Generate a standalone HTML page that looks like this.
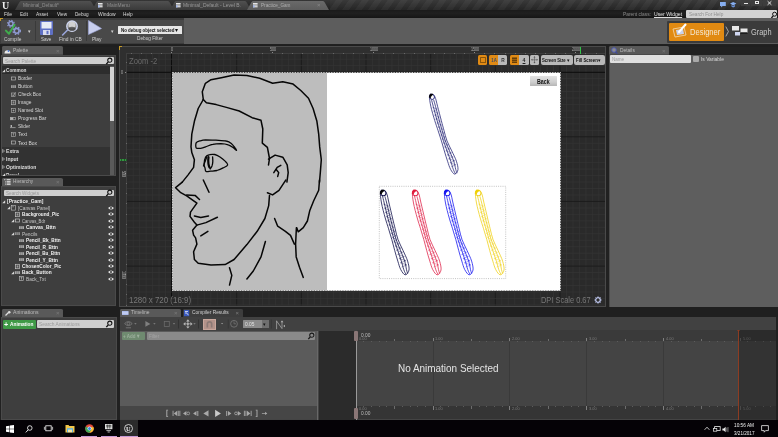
<!DOCTYPE html>
<html><head><meta charset="utf-8"><title>Practice_Gam</title>
<style>
html,body{margin:0;padding:0;background:#212121;}
#r{position:relative;width:778px;height:437px;overflow:hidden;will-change:transform;font-family:"Liberation Sans",sans-serif;background:#212121;}
#r div,#r span,#r svg{position:absolute;}
#r span{white-space:nowrap;display:block;}
#r svg{overflow:visible;}
</style></head><body><div id="r">
<div style="left:0px;top:0px;width:778px;height:10.3px;background:#2b2b2b;background:linear-gradient(rgba(255,255,255,.07),rgba(0,0,0,.12)),repeating-linear-gradient(125deg,#333 0 5px,#2a2a2a 5.6px 10px,#333 10.6px);"></div><div style="left:0px;top:0px;width:330px;height:10px;background:#262626;background:linear-gradient(#363636,#1f1f1f);"></div><svg style="left:0px;top:0px" width="16" height="10" viewBox="0 0 16 10"><circle cx="7" cy="5" r="0" fill="none"/><text x="2" y="8.6" font-size="10" font-weight="700" fill="#eee" font-family="Liberation Serif,serif">U</text></svg><svg style="left:15px;top:1px" width="81" height="9" viewBox="0 0 81 9"><path d="M0 9 L4.4 1.2 Q5 0 6.6 0 L74.4 0 Q76 0 76.6 1.2 L81 9 Z" fill="url(#tg19)"/><defs><linearGradient id="tg19" x1="0" y1="0" x2="0" y2="1"><stop offset="0" stop-color="#505050"/><stop offset="1" stop-color="#3a3a3a"/></linearGradient></defs></svg><span style="left:23.4px;top:0.00px;line-height:10px;font-size:5.8px;color:#8f8f8f;font-weight:400;transform:scaleX(0.819);transform-origin:left center;">Minimal_Default*</span><svg style="left:92px;top:1px" width="82" height="9" viewBox="0 0 82 9"><path d="M0 9 L4.4 1.2 Q5 0 6.6 0 L75.4 0 Q77 0 77.6 1.2 L82 9 Z" fill="url(#tg96)"/><defs><linearGradient id="tg96" x1="0" y1="0" x2="0" y2="1"><stop offset="0" stop-color="#505050"/><stop offset="1" stop-color="#3a3a3a"/></linearGradient></defs></svg><svg style="left:97.8px;top:2.6px" width="5" height="5" viewBox="0 0 5 5"><rect x="0" y="0" width="4.6" height="1.6" fill="#e4e4e4"/><rect x="0" y="2.2" width="4.6" height="2.2" fill="#cfcfcf"/><rect x="0" y="2.2" width="1.6" height="2.2" fill="#9fb4e8"/></svg><span style="left:106.7px;top:0.00px;line-height:10px;font-size:5.8px;color:#8f8f8f;font-weight:400;transform:scaleX(0.842);transform-origin:left center;">MainMenu</span><svg style="left:170px;top:1px" width="81" height="9" viewBox="0 0 81 9"><path d="M0 9 L4.4 1.2 Q5 0 6.6 0 L74.4 0 Q76 0 76.6 1.2 L81 9 Z" fill="url(#tg174)"/><defs><linearGradient id="tg174" x1="0" y1="0" x2="0" y2="1"><stop offset="0" stop-color="#505050"/><stop offset="1" stop-color="#3a3a3a"/></linearGradient></defs></svg><svg style="left:175.8px;top:2.6px" width="5" height="5" viewBox="0 0 5 5"><rect x="0" y="0" width="4.6" height="1.6" fill="#e4e4e4"/><rect x="0" y="2.2" width="4.6" height="2.2" fill="#cfcfcf"/><rect x="0" y="2.2" width="1.6" height="2.2" fill="#9fb4e8"/></svg><span style="left:183px;top:0.00px;line-height:10px;font-size:5.8px;color:#9a9a9a;font-weight:400;transform:scaleX(0.857);transform-origin:left center;">Minimal_Default - Level B.</span><svg style="left:247px;top:1px" width="82" height="9" viewBox="0 0 82 9"><path d="M0 9 L4.4 1.2 Q5 0 6.6 0 L75.4 0 Q77 0 77.6 1.2 L82 9 Z" fill="url(#tg251)"/><defs><linearGradient id="tg251" x1="0" y1="0" x2="0" y2="1"><stop offset="0" stop-color="#6a6a6a"/><stop offset="1" stop-color="#5c5c5c"/></linearGradient></defs></svg><svg style="left:252.8px;top:2.6px" width="5" height="5" viewBox="0 0 5 5"><rect x="0" y="0" width="4.6" height="1.6" fill="#e4e4e4"/><rect x="0" y="2.2" width="4.6" height="2.2" fill="#cfcfcf"/><rect x="0" y="2.2" width="1.6" height="2.2" fill="#9fb4e8"/></svg><span style="left:260.5px;top:0.00px;line-height:10px;font-size:5.8px;color:#b0b0b0;font-weight:400;transform:scaleX(0.803);transform-origin:left center;">Practice_Gam</span><span style="left:317px;top:0.20px;line-height:10px;font-size:6px;color:#888;font-weight:400;">×</span><svg style="left:719.5px;top:1.8px" width="6" height="6" viewBox="0 0 6 6"><path d="M0 0h5.8v4H2.6L1.2 5.6V4H0z" fill="#86aef0"/></svg><svg style="left:729.5px;top:2px" width="6.4" height="6" viewBox="0 0 6.4 6"><path d="M0 1.6L3.2 0 6.4 1.6 3.2 3.4z" fill="#86aef0"/><path d="M1.4 3v1.6L3.2 5.6 5 4.6V3L3.2 4z" fill="#6a92d8"/></svg><div style="left:741px;top:0px;width:9.4px;height:5.6px;background:#3d3d3d;"></div><div style="left:751px;top:0px;width:11.4px;height:5.6px;background:#3d3d3d;"></div><div style="left:763px;top:0px;width:13.4px;height:5.6px;background:#3d3d3d;"></div><div style="left:743.6px;top:3px;width:4px;height:1.2px;background:#e6e6e6;"></div><div style="left:754.6px;top:1px;width:4px;height:3.4px;background:transparent;border:1px solid #e6e6e6;box-sizing:border-box"></div><svg style="left:767px;top:0.8px" width="5" height="4" viewBox="0 0 5 4"><path d="M.6 .2L4.4 3.8M4.4 .2L.6 3.8" stroke="#e6e6e6" stroke-width="1"/></svg><div style="left:0px;top:10.3px;width:778px;height:8px;background:#191919;background:linear-gradient(#1a1a1a,#202020 40%,#151515);"></div><span style="left:3.7px;top:9.00px;line-height:10px;font-size:6px;color:#d8d8d8;font-weight:400;transform:scaleX(0.827);transform-origin:left center;">File</span><span style="left:19.7px;top:9.00px;line-height:10px;font-size:6px;color:#d8d8d8;font-weight:400;transform:scaleX(0.764);transform-origin:left center;">Edit</span><span style="left:36.4px;top:9.00px;line-height:10px;font-size:6px;color:#d8d8d8;font-weight:400;transform:scaleX(0.806);transform-origin:left center;">Asset</span><span style="left:56.8px;top:9.00px;line-height:10px;font-size:6px;color:#d8d8d8;font-weight:400;transform:scaleX(0.775);transform-origin:left center;">View</span><span style="left:75.2px;top:9.00px;line-height:10px;font-size:6px;color:#d8d8d8;font-weight:400;transform:scaleX(0.775);transform-origin:left center;">Debug</span><span style="left:97.7px;top:9.00px;line-height:10px;font-size:6px;color:#d8d8d8;font-weight:400;transform:scaleX(0.825);transform-origin:left center;">Window</span><span style="left:122.8px;top:9.00px;line-height:10px;font-size:6px;color:#d8d8d8;font-weight:400;transform:scaleX(0.786);transform-origin:left center;">Help</span><span style="left:622.9px;top:9.00px;line-height:10px;font-size:5.8px;color:#8a8a8a;font-weight:400;transform:scaleX(0.832);transform-origin:left center;">Parent class:</span><span style="left:653.8px;top:9.00px;line-height:10px;font-size:5.8px;color:#e0e0e0;font-weight:400;transform:scaleX(0.881);transform-origin:left center;text-decoration:underline;">User Widget</span><div style="left:686px;top:10.3px;width:90.6px;height:7.3px;background:#d2d2d2;border-radius:1px"></div><span style="left:688.8px;top:9.00px;line-height:10px;font-size:5.8px;color:#8f8f8f;font-weight:400;transform:scaleX(0.812);transform-origin:left center;">Search For Help</span><svg style="left:770px;top:10.5px" width="8" height="8" viewBox="0 0 8 8"><circle cx="4.6" cy="3.2" r="2" fill="none" stroke="#111" stroke-width="1"/><path d="M3.2 4.8 L1.4 7" stroke="#111" stroke-width="1.2"/></svg><div style="left:0px;top:18.3px;width:778px;height:26.2px;background:#5d5d5d;"></div><div style="left:0px;top:18.3px;width:184px;height:26.2px;background:#3c3c3c;"></div><div style="left:1px;top:19.5px;width:183px;height:23.2px;background:#494949;"></div><div style="left:0px;top:44.5px;width:778px;height:2px;background:#1f1f1f;"></div><div style="left:34.5px;top:21px;width:0.8px;height:20px;background:#3a3a3a;"></div><div style="left:85.5px;top:21px;width:0.8px;height:20px;background:#3a3a3a;"></div><svg style="left:1px;top:19px" width="22" height="18" viewBox="0 0 22 18"><g fill="none" stroke="#8e9ad2"><circle cx="9.9" cy="4.8" r="2.2" stroke-width="1.5"/><circle cx="9.9" cy="4.8" r="3.4" stroke-width="1.2" stroke-dasharray="1.33 1.34"/>
<circle cx="15.7" cy="11.8" r="2.4" stroke-width="1.6"/><circle cx="15.7" cy="11.8" r="3.7" stroke-width="1.3" stroke-dasharray="1.53 1.53"/></g>
<path d="M4.9 11.6 L8 14.7 L13.6 5.8" fill="none" stroke="#3fae4c" stroke-width="2" stroke-linecap="round" stroke-linejoin="round"/></svg><span style="left:3.9px;top:33.90px;line-height:10px;font-size:6px;color:#d0d0d0;font-weight:400;transform:scaleX(0.786);transform-origin:left center;">Compile</span><span style="left:27.6px;top:26.00px;line-height:10px;font-size:5.4px;color:#d0d0d0;font-weight:400;">▾</span><svg style="left:40px;top:20.5px" width="13" height="14" viewBox="0 0 13 14"><rect x="0" y="0" width="13" height="14" rx="1" fill="#5f70c4"/><rect x="1.5" y="1" width="10" height="6.5" fill="#e9ecf6"/><rect x="3" y="9" width="7" height="5" fill="#d9dcee"/><rect x="6.5" y="9.8" width="2" height="3.4" fill="#5f70c4"/></svg><span style="left:40.9px;top:33.90px;line-height:10px;font-size:6px;color:#d0d0d0;font-weight:400;transform:scaleX(0.753);transform-origin:left center;">Save</span><svg style="left:60.5px;top:20.3px" width="18" height="16" viewBox="0 0 18 16"><circle cx="11" cy="6.2" r="5.2" fill="#888" stroke="#cfd6f0" stroke-width="1.4"/><circle cx="11" cy="5" r="3.6" fill="#e8e8e8" opacity=".75"/><ellipse cx="11" cy="8.8" rx="3.6" ry="2" fill="#333" opacity=".7"/><path d="M6.6 10 L1.6 15" stroke="#9aa6dc" stroke-width="1.6" stroke-linecap="round"/></svg><span style="left:58.9px;top:33.90px;line-height:10px;font-size:6px;color:#d0d0d0;font-weight:400;transform:scaleX(0.81);transform-origin:left center;">Find in CB</span><svg style="left:88px;top:20px" width="14" height="15" viewBox="0 0 14 15"><path d="M0.5 0.5 L13.5 8.5 L0.5 14.5 Z" fill="#c9cfee" stroke="#9fa8dc" stroke-width=".6"/></svg><span style="left:91.7px;top:33.90px;line-height:10px;font-size:6px;color:#d0d0d0;font-weight:400;transform:scaleX(0.814);transform-origin:left center;">Play</span><span style="left:110.6px;top:26.00px;line-height:10px;font-size:5.4px;color:#d0d0d0;font-weight:400;">▾</span><div style="left:118px;top:25.6px;width:64px;height:8.5px;background:#e6e6e6;border-radius:.5px"></div><span style="left:120.5px;top:24.80px;line-height:10px;font-size:5.8px;color:#111;font-weight:700;transform:scaleX(0.761);transform-origin:left center;">No debug object selected</span><span style="left:175px;top:24.80px;line-height:10px;font-size:5.6px;color:#111;font-weight:400;">▾</span><span style="left:137.2px;top:32.70px;line-height:10px;font-size:6px;color:#cfcfcf;font-weight:400;transform:scaleX(0.792);transform-origin:left center;">Debug Filter</span><div style="left:666.5px;top:20.5px;width:111.5px;height:22px;background:#3b3b3b;border-radius:1px"></div><div style="left:669px;top:22.5px;width:55px;height:18.5px;background:#e18a12;border-radius:1px"></div><svg style="left:671px;top:23px" width="17" height="17" viewBox="0 0 17 17"><path d="M2 6 L13 4 L15 12 L4 14 Z" fill="none" stroke="#f5d9b0" stroke-width=".8"/><path d="M5 7 L12 6 L13 11 L6 12 Z" fill="#c9d3ee"/><path d="M14.5 1.5 L8 9" stroke="#fff" stroke-width="2" stroke-linecap="round"/></svg><span style="left:689.7px;top:26.50px;line-height:10px;font-size:8.4px;color:#f4e8d4;font-weight:400;transform:scaleX(0.904);transform-origin:left center;">Designer</span><svg style="left:725px;top:26px" width="5" height="11" viewBox="0 0 5 11"><path d="M.8 .6L3.4 5.5.8 10.4" fill="none" stroke="#c4c4c4" stroke-width=".8"/></svg><svg style="left:732px;top:25px" width="16" height="12" viewBox="0 0 16 12"><rect x="0" y="1" width="7" height="4.5" fill="#e8e8e8"/><rect x="8.5" y="3.5" width="7" height="4.5" fill="#e8e8e8"/><rect x="3" y="7" width="5" height="3.5" fill="#cfd6f0"/><path d="M8.5 8 h7" stroke="#111" stroke-width="1.4"/></svg><span style="left:750.6px;top:26.50px;line-height:10px;font-size:8.4px;color:#c9c9c9;font-weight:400;transform:scaleX(0.882);transform-origin:left center;">Graph</span><div style="left:0px;top:18.3px;width:3px;height:3px;background:transparent;border-top:1.6px solid #c49a28;border-left:1.6px solid #c49a28;box-sizing:border-box"></div><div style="left:0px;top:46.5px;width:117px;height:129.5px;background:#212121;"></div><svg style="left:2px;top:46.3px" width="65" height="8.7" viewBox="0 0 65 8.7"><path d="M0 8.7 L0 1.5 Q0 0 1.5 0 L59 0 Q61 0 61 1.5 L61 8.7 Z" fill="#595959"/></svg><span style="left:12.5px;top:45.15px;line-height:10px;font-size:5.8px;color:#bcbcbc;font-weight:400;transform:scaleX(0.836);transform-origin:left center;">Palette</span><span style="left:56px;top:45.65px;line-height:10px;font-size:6px;color:#7c7c7c;font-weight:400;">×</span><svg style="left:4px;top:47.5px" width="7" height="6" viewBox="0 0 7 6"><path d="M0.5 5.5 A3 3.2 0 1 1 6.5 5.5 Z" fill="#e8e8e8"/><circle cx="4.5" cy="3" r=".9" fill="#4a78d0"/></svg><div style="left:1px;top:55px;width:115px;height:120.5px;background:#3e3e3e;border:1px solid #4a4a4a;box-sizing:border-box"></div><div style="left:3px;top:57.2px;width:110.7px;height:6.8px;background:#cfcfcf;border-radius:1px"></div><span style="left:4.7px;top:55.70px;line-height:10px;font-size:5.8px;color:#9a9a9a;font-weight:400;transform:scaleX(0.82);transform-origin:left center;">Search Palette</span><svg style="left:105.4px;top:57.0px" width="8" height="8" viewBox="0 0 8 8"><circle cx="4.8" cy="3.2" r="2.1" fill="none" stroke="#111" stroke-width="1.05"/><path d="M3.3 4.9 L1.3 7.1" stroke="#111" stroke-width="1.4"/></svg><div style="left:2px;top:66.4px;width:107.5px;height:7.6px;background:#2d2d2d;"></div><svg style="left:2.2px;top:68.7px" width="3.4" height="3.4" viewBox="0 0 3.4 3.4"><path d="M3.2 .2V3.2H.2Z" fill="#d8d8d8"/></svg><span style="left:6.3px;top:65.20px;line-height:10px;font-size:6px;color:#dcdcdc;font-weight:700;transform:scaleX(0.785);transform-origin:left center;">Common</span><div style="left:110.2px;top:66.4px;width:3.6px;height:108.4px;background:#5a5a5a;"></div><div style="left:110.2px;top:66.7px;width:3.6px;height:54.8px;background:#d2d2d2;"></div><svg style="left:10.8px;top:75.5px" width="5" height="5" viewBox="0 0 5 5"><rect x=".5" y="1" width="4" height="3" fill="none" stroke="#b4b4b4" stroke-width=".7"/></svg><span style="left:17.5px;top:73.00px;line-height:10px;font-size:6px;color:#d6d6d6;font-weight:400;transform:scaleX(0.788);transform-origin:left center;">Border</span><svg style="left:10.8px;top:83.57px" width="5" height="5" viewBox="0 0 5 5"><rect x="0" y="1.2" width="5" height="2.8" fill="#b4b4b4" opacity=".8"/><path d="M1.7 1.2v2.8M3.3 1.2v2.8" stroke="#444" stroke-width=".4"/></svg><span style="left:17.5px;top:81.07px;line-height:10px;font-size:6px;color:#d6d6d6;font-weight:400;transform:scaleX(0.836);transform-origin:left center;">Button</span><svg style="left:10.8px;top:91.64px" width="5" height="5" viewBox="0 0 5 5"><rect x=".5" y="1" width="3.6" height="3.6" fill="none" stroke="#b4b4b4" stroke-width=".6"/><path d="M1.2 2.6 L2.2 3.8 L4.6 .4" fill="none" stroke="#b4b4b4" stroke-width=".8"/></svg><span style="left:17.5px;top:89.14px;line-height:10px;font-size:6px;color:#d6d6d6;font-weight:400;transform:scaleX(0.796);transform-origin:left center;">Check Box</span><svg style="left:10.8px;top:99.71000000000001px" width="5" height="5" viewBox="0 0 5 5"><rect x=".5" y=".3" width="4" height="4.4" fill="none" stroke="#b4b4b4" stroke-width=".7"/><rect x="1.6" y="1.4" width="1.8" height="2.2" fill="#b4b4b4" opacity=".7"/></svg><span style="left:17.5px;top:97.21px;line-height:10px;font-size:6px;color:#d6d6d6;font-weight:400;transform:scaleX(0.804);transform-origin:left center;">Image</span><svg style="left:10.8px;top:107.78px" width="5" height="5" viewBox="0 0 5 5"><rect x=".4" y=".6" width="4.2" height="3.8" fill="none" stroke="#b4b4b4" stroke-width=".6"/><path d="M2.5 1.5v2M1.5 2.5h2" stroke="#b4b4b4" stroke-width=".6"/></svg><span style="left:17.5px;top:105.28px;line-height:10px;font-size:6px;color:#d6d6d6;font-weight:400;transform:scaleX(0.801);transform-origin:left center;">Named Slot</span><svg style="left:10px;top:115.85px" width="6" height="5" viewBox="0 0 6 5"><rect x=".3" y="1.4" width="5.2" height="2.4" fill="none" stroke="#b4b4b4" stroke-width=".6"/><rect x=".3" y="1.4" width="3" height="2.4" fill="#b4b4b4"/></svg><span style="left:17.5px;top:113.35px;line-height:10px;font-size:6px;color:#d6d6d6;font-weight:400;transform:scaleX(0.808);transform-origin:left center;">Progress Bar</span><svg style="left:10px;top:123.92px" width="6" height="5" viewBox="0 0 6 5"><path d="M0 3.6h5.6" stroke="#b4b4b4" stroke-width=".7"/><rect x=".6" y="1" width="1.4" height="2.2" fill="#b4b4b4"/></svg><span style="left:17.5px;top:121.42px;line-height:10px;font-size:6px;color:#d6d6d6;font-weight:400;transform:scaleX(0.789);transform-origin:left center;">Slider</span><svg style="left:10.8px;top:131.99px" width="5" height="5" viewBox="0 0 5 5"><rect x=".5" y=".5" width="4" height="4" fill="none" stroke="#b4b4b4" stroke-width=".6"/><path d="M1.6 1.6h1.8M2.5 1.6v2" stroke="#b4b4b4" stroke-width=".6"/></svg><span style="left:17.5px;top:129.49px;line-height:10px;font-size:6px;color:#d6d6d6;font-weight:400;transform:scaleX(0.818);transform-origin:left center;">Text</span><svg style="left:10.8px;top:140.06px" width="5" height="5" viewBox="0 0 5 5"><rect x=".5" y="1" width="4" height="3" fill="none" stroke="#b4b4b4" stroke-width=".7"/></svg><span style="left:17.5px;top:137.56px;line-height:10px;font-size:6px;color:#d6d6d6;font-weight:400;transform:scaleX(0.826);transform-origin:left center;">Text Box</span><div style="left:2px;top:146.8px;width:107.5px;height:28px;background:#323232;"></div><svg style="left:2.2px;top:148.8px" width="3" height="4" viewBox="0 0 3 4"><path d="M.5 .4L2.6 2 .5 3.6Z" fill="none" stroke="#c8c8c8" stroke-width=".6"/></svg><span style="left:5.7px;top:145.80px;line-height:10px;font-size:6px;color:#dcdcdc;font-weight:700;transform:scaleX(0.853);transform-origin:left center;">Extra</span><svg style="left:2.2px;top:156.85000000000002px" width="3" height="4" viewBox="0 0 3 4"><path d="M.5 .4L2.6 2 .5 3.6Z" fill="none" stroke="#c8c8c8" stroke-width=".6"/></svg><span style="left:5.7px;top:153.85px;line-height:10px;font-size:6px;color:#dcdcdc;font-weight:700;transform:scaleX(0.839);transform-origin:left center;">Input</span><svg style="left:2.2px;top:164.9px" width="3" height="4" viewBox="0 0 3 4"><path d="M.5 .4L2.6 2 .5 3.6Z" fill="none" stroke="#c8c8c8" stroke-width=".6"/></svg><span style="left:5.7px;top:161.90px;line-height:10px;font-size:6px;color:#dcdcdc;font-weight:700;transform:scaleX(0.834);transform-origin:left center;">Optimization</span><span style="left:6px;top:170.20px;line-height:10px;font-size:6px;color:#dcdcdc;font-weight:700;transform:scaleX(0.82);transform-origin:left center;clip-path:inset(0 0 5.4px 0);">Panel</span><svg style="left:2.2px;top:173.3px" width="3.4" height="1.8" viewBox="0 0 3.4 1.8"><path d="M3.2 .2V3.2H.2Z" fill="#d8d8d8"/></svg><div style="left:0px;top:176px;width:117px;height:132px;background:#212121;"></div><svg style="left:2px;top:177.7px" width="65" height="8.5" viewBox="0 0 65 8.5"><path d="M0 8.5 L0 1.5 Q0 0 1.5 0 L59 0 Q61 0 61 1.5 L61 8.5 Z" fill="#595959"/></svg><span style="left:12.5px;top:176.45px;line-height:10px;font-size:5.8px;color:#bcbcbc;font-weight:400;transform:scaleX(0.81);transform-origin:left center;">Hierarchy</span><span style="left:56px;top:176.95px;line-height:10px;font-size:6px;color:#7c7c7c;font-weight:400;">×</span><svg style="left:4px;top:179px" width="7" height="6" viewBox="0 0 7 6"><path d="M.2 .7h1.2M1 2.9h.9M1 5.1h.9" stroke="#e8e8e8" stroke-width=".9"/><path d="M2.6 .7h4M2.6 2.9h4M2.6 5.1h4" stroke="#f0f0f0" stroke-width="1.1"/></svg><div style="left:1px;top:186.2px;width:115px;height:120px;background:#3e3e3e;border:1px solid #4a4a4a;box-sizing:border-box"></div><div style="left:3.5px;top:189.5px;width:110px;height:6.9px;background:#cfcfcf;border-radius:1px"></div><span style="left:5.8px;top:188.00px;line-height:10px;font-size:5.8px;color:#9a9a9a;font-weight:400;transform:scaleX(0.806);transform-origin:left center;">Search Widgets</span><svg style="left:105.2px;top:189.3px" width="8" height="8" viewBox="0 0 8 8"><circle cx="4.8" cy="3.2" r="2.1" fill="none" stroke="#111" stroke-width="1.05"/><path d="M3.3 4.9 L1.3 7.1" stroke="#111" stroke-width="1.4"/></svg><svg style="left:2.4px;top:199.8px" width="3.4" height="3.4" viewBox="0 0 3.4 3.4"><path d="M3.2 .2V3.2H.2Z" fill="#d8d8d8"/></svg><span style="left:6.7px;top:196.30px;line-height:10px;font-size:6px;color:#eee;font-weight:700;transform:scaleX(0.827);transform-origin:left center;">[Practice_Gam]</span><svg style="left:6.8px;top:206.27px" width="3.4" height="3.4" viewBox="0 0 3.4 3.4"><path d="M3.2 .2V3.2H.2Z" fill="#d8d8d8"/></svg><svg style="left:11.1px;top:205.27px" width="5" height="6" viewBox="0 0 5 6"><rect x=".5" y=".5" width="4" height="4.6" fill="none" stroke="#c4c4c4" stroke-width=".6"/><path d="M1.3 1.8h1.6" stroke="#c4c4c4" stroke-width=".6"/></svg><span style="left:17.6px;top:202.77px;line-height:10px;font-size:6px;color:#c6c6c6;font-weight:400;transform:scaleX(0.791);transform-origin:left center;">[Canvas Panel]</span><svg style="left:107.5px;top:205.77px" width="6" height="4" viewBox="0 0 6 4"><path d="M0 2 Q3 -1.2 6 2 Q3 5.2 0 2Z" fill="#e4e4e4"/><circle cx="3" cy="2" r="1" fill="#3e3e3e"/></svg><svg style="left:15.2px;top:211.74px" width="5" height="5" viewBox="0 0 5 5"><rect x=".5" y=".3" width="4" height="4.4" fill="none" stroke="#c4c4c4" stroke-width=".7"/><rect x="1.6" y="1.4" width="1.8" height="2.2" fill="#c4c4c4" opacity=".7"/></svg><span style="left:21.7px;top:209.24px;line-height:10px;font-size:6px;color:#f0f0f0;font-weight:700;transform:scaleX(0.784);transform-origin:left center;">Background_Pic</span><svg style="left:107.5px;top:212.24px" width="6" height="4" viewBox="0 0 6 4"><path d="M0 2 Q3 -1.2 6 2 Q3 5.2 0 2Z" fill="#e4e4e4"/><circle cx="3" cy="2" r="1" fill="#3e3e3e"/></svg><svg style="left:10.899999999999999px;top:219.21px" width="3.4" height="3.4" viewBox="0 0 3.4 3.4"><path d="M3.2 .2V3.2H.2Z" fill="#d8d8d8"/></svg><svg style="left:15.2px;top:218.21px" width="5" height="5" viewBox="0 0 5 5"><rect x=".5" y="1" width="4" height="3" fill="none" stroke="#c4c4c4" stroke-width=".7"/></svg><span style="left:21.7px;top:215.71px;line-height:10px;font-size:6px;color:#c6c6c6;font-weight:400;transform:scaleX(0.7);transform-origin:left center;">Canvas_Bdr</span><svg style="left:107.5px;top:218.71px" width="6" height="4" viewBox="0 0 6 4"><path d="M0 2 Q3 -1.2 6 2 Q3 5.2 0 2Z" fill="#e4e4e4"/><circle cx="3" cy="2" r="1" fill="#3e3e3e"/></svg><svg style="left:19.299999999999997px;top:224.68px" width="5" height="5" viewBox="0 0 5 5"><rect x="0" y="1.2" width="5" height="2.8" fill="#c4c4c4" opacity=".8"/><path d="M1.7 1.2v2.8M3.3 1.2v2.8" stroke="#444" stroke-width=".4"/></svg><span style="left:25.799999999999997px;top:222.18px;line-height:10px;font-size:6px;color:#f0f0f0;font-weight:700;transform:scaleX(0.81);transform-origin:left center;">Canvas_Bttn</span><svg style="left:107.5px;top:225.18px" width="6" height="4" viewBox="0 0 6 4"><path d="M0 2 Q3 -1.2 6 2 Q3 5.2 0 2Z" fill="#e4e4e4"/><circle cx="3" cy="2" r="1" fill="#3e3e3e"/></svg><svg style="left:10.899999999999999px;top:232.15px" width="3.4" height="3.4" viewBox="0 0 3.4 3.4"><path d="M3.2 .2V3.2H.2Z" fill="#d8d8d8"/></svg><svg style="left:15.2px;top:231.15px" width="5" height="5" viewBox="0 0 5 5"><rect x="0" y="1.2" width="5" height="2.8" fill="#c4c4c4" opacity=".6"/><path d="M1.7 1.2v2.8M3.3 1.2v2.8" stroke="#444" stroke-width=".4"/></svg><span style="left:21.7px;top:228.65px;line-height:10px;font-size:6px;color:#c6c6c6;font-weight:400;transform:scaleX(0.796);transform-origin:left center;">Pencils</span><svg style="left:107.5px;top:231.65px" width="6" height="4" viewBox="0 0 6 4"><path d="M0 2 Q3 -1.2 6 2 Q3 5.2 0 2Z" fill="#e4e4e4"/><circle cx="3" cy="2" r="1" fill="#3e3e3e"/></svg><svg style="left:19.299999999999997px;top:237.62px" width="5" height="5" viewBox="0 0 5 5"><rect x="0" y="1.2" width="5" height="2.8" fill="#c4c4c4" opacity=".8"/><path d="M1.7 1.2v2.8M3.3 1.2v2.8" stroke="#444" stroke-width=".4"/></svg><span style="left:25.799999999999997px;top:235.12px;line-height:10px;font-size:6px;color:#f0f0f0;font-weight:700;transform:scaleX(0.788);transform-origin:left center;">Pencil_Bk_Bttn</span><svg style="left:107.5px;top:238.12px" width="6" height="4" viewBox="0 0 6 4"><path d="M0 2 Q3 -1.2 6 2 Q3 5.2 0 2Z" fill="#e4e4e4"/><circle cx="3" cy="2" r="1" fill="#3e3e3e"/></svg><svg style="left:19.299999999999997px;top:244.09px" width="5" height="5" viewBox="0 0 5 5"><rect x="0" y="1.2" width="5" height="2.8" fill="#c4c4c4" opacity=".8"/><path d="M1.7 1.2v2.8M3.3 1.2v2.8" stroke="#444" stroke-width=".4"/></svg><span style="left:25.799999999999997px;top:241.59px;line-height:10px;font-size:6px;color:#f0f0f0;font-weight:700;transform:scaleX(0.784);transform-origin:left center;">Pencil_R_Bttn</span><svg style="left:107.5px;top:244.59px" width="6" height="4" viewBox="0 0 6 4"><path d="M0 2 Q3 -1.2 6 2 Q3 5.2 0 2Z" fill="#e4e4e4"/><circle cx="3" cy="2" r="1" fill="#3e3e3e"/></svg><svg style="left:19.299999999999997px;top:250.56px" width="5" height="5" viewBox="0 0 5 5"><rect x="0" y="1.2" width="5" height="2.8" fill="#c4c4c4" opacity=".8"/><path d="M1.7 1.2v2.8M3.3 1.2v2.8" stroke="#444" stroke-width=".4"/></svg><span style="left:25.799999999999997px;top:248.06px;line-height:10px;font-size:6px;color:#f0f0f0;font-weight:700;transform:scaleX(0.769);transform-origin:left center;">Pencil_Bu_Bttn</span><svg style="left:107.5px;top:251.06px" width="6" height="4" viewBox="0 0 6 4"><path d="M0 2 Q3 -1.2 6 2 Q3 5.2 0 2Z" fill="#e4e4e4"/><circle cx="3" cy="2" r="1" fill="#3e3e3e"/></svg><svg style="left:19.299999999999997px;top:257.03000000000003px" width="5" height="5" viewBox="0 0 5 5"><rect x="0" y="1.2" width="5" height="2.8" fill="#c4c4c4" opacity=".8"/><path d="M1.7 1.2v2.8M3.3 1.2v2.8" stroke="#444" stroke-width=".4"/></svg><span style="left:25.799999999999997px;top:254.53px;line-height:10px;font-size:6px;color:#f0f0f0;font-weight:700;transform:scaleX(0.791);transform-origin:left center;">Pencil_Y_Bttn</span><svg style="left:107.5px;top:257.53000000000003px" width="6" height="4" viewBox="0 0 6 4"><path d="M0 2 Q3 -1.2 6 2 Q3 5.2 0 2Z" fill="#e4e4e4"/><circle cx="3" cy="2" r="1" fill="#3e3e3e"/></svg><svg style="left:15.2px;top:263.5px" width="5" height="5" viewBox="0 0 5 5"><rect x=".5" y=".3" width="4" height="4.4" fill="none" stroke="#c4c4c4" stroke-width=".7"/><rect x="1.6" y="1.4" width="1.8" height="2.2" fill="#c4c4c4" opacity=".7"/></svg><span style="left:21.7px;top:261.00px;line-height:10px;font-size:6px;color:#f0f0f0;font-weight:700;transform:scaleX(0.784);transform-origin:left center;">ChosenColor_Pic</span><svg style="left:107.5px;top:264.0px" width="6" height="4" viewBox="0 0 6 4"><path d="M0 2 Q3 -1.2 6 2 Q3 5.2 0 2Z" fill="#e4e4e4"/><circle cx="3" cy="2" r="1" fill="#3e3e3e"/></svg><svg style="left:10.899999999999999px;top:270.97px" width="3.4" height="3.4" viewBox="0 0 3.4 3.4"><path d="M3.2 .2V3.2H.2Z" fill="#d8d8d8"/></svg><svg style="left:15.2px;top:269.97px" width="5" height="5" viewBox="0 0 5 5"><rect x="0" y="1.2" width="5" height="2.8" fill="#c4c4c4" opacity=".8"/><path d="M1.7 1.2v2.8M3.3 1.2v2.8" stroke="#444" stroke-width=".4"/></svg><span style="left:21.7px;top:267.47px;line-height:10px;font-size:6px;color:#f0f0f0;font-weight:700;transform:scaleX(0.8);transform-origin:left center;">Back_Button</span><svg style="left:107.5px;top:270.47px" width="6" height="4" viewBox="0 0 6 4"><path d="M0 2 Q3 -1.2 6 2 Q3 5.2 0 2Z" fill="#e4e4e4"/><circle cx="3" cy="2" r="1" fill="#3e3e3e"/></svg><svg style="left:19.299999999999997px;top:276.44px" width="5" height="5" viewBox="0 0 5 5"><rect x=".5" y=".5" width="4" height="4" fill="none" stroke="#c4c4c4" stroke-width=".6"/><path d="M1.6 1.6h1.8M2.5 1.6v2" stroke="#c4c4c4" stroke-width=".6"/></svg><span style="left:25.799999999999997px;top:273.94px;line-height:10px;font-size:6px;color:#c6c6c6;font-weight:400;transform:scaleX(0.788);transform-origin:left center;">Back_Txt</span><svg style="left:107.5px;top:276.94px" width="6" height="4" viewBox="0 0 6 4"><path d="M0 2 Q3 -1.2 6 2 Q3 5.2 0 2Z" fill="#e4e4e4"/><circle cx="3" cy="2" r="1" fill="#3e3e3e"/></svg><div style="left:0px;top:307px;width:778px;height:10px;background:#1f1f1f;"></div><svg style="left:2px;top:308.7px" width="65" height="8.3" viewBox="0 0 65 8.3"><path d="M0 8.3 L0 1.5 Q0 0 1.5 0 L59 0 Q61 0 61 1.5 L61 8.3 Z" fill="#595959"/></svg><span style="left:12.5px;top:307.35px;line-height:10px;font-size:5.8px;color:#bcbcbc;font-weight:400;transform:scaleX(0.892);transform-origin:left center;">Animations</span><span style="left:56px;top:307.85px;line-height:10px;font-size:6px;color:#7c7c7c;font-weight:400;">×</span><svg style="left:4.5px;top:310.5px" width="6" height="5" viewBox="0 0 6 5"><path d="M0.5 4.5 L4 1" stroke="#e0e0e0" stroke-width="1.3"/><circle cx="4.3" cy="1.3" r="1.2" fill="#e0e0e0"/></svg><div style="left:0px;top:317px;width:117px;height:103.5px;background:#212121;"></div><div style="left:1px;top:317px;width:115.5px;height:103px;background:#3e3e3e;border:1px solid #4a4a4a;box-sizing:border-box"></div><div style="left:3px;top:320px;width:33px;height:8.5px;background:#3f9a46;border-radius:1px"></div><span style="left:4px;top:319.90px;line-height:10px;font-size:8px;color:#fff;font-weight:700;transform:scaleX(0.9);transform-origin:left center;">+</span><span style="left:9.7px;top:319.30px;line-height:10px;font-size:5.8px;color:#fff;font-weight:700;transform:scaleX(0.825);transform-origin:left center;">Animation</span><div style="left:37px;top:320.4px;width:76.5px;height:7.6px;background:#cfcfcf;border-radius:1px"></div><span style="left:39.3px;top:319.20px;line-height:10px;font-size:5.8px;color:#9a9a9a;font-weight:400;transform:scaleX(0.84);transform-origin:left center;">Search Animations</span><svg style="left:105.4px;top:320.40000000000003px" width="8" height="8" viewBox="0 0 8 8"><circle cx="4.8" cy="3.2" r="2.1" fill="none" stroke="#111" stroke-width="1.05"/><path d="M3.3 4.9 L1.3 7.1" stroke="#111" stroke-width="1.4"/></svg><div style="left:607px;top:46.5px;width:171px;height:260.5px;background:#212121;"></div><svg style="left:609px;top:46.3px" width="64" height="8.7" viewBox="0 0 64 8.7"><path d="M0 8.7 L0 1.5 Q0 0 1.5 0 L58 0 Q60 0 60 1.5 L60 8.7 Z" fill="#595959"/></svg><span style="left:619.5px;top:45.15px;line-height:10px;font-size:5.8px;color:#bcbcbc;font-weight:400;transform:scaleX(0.835);transform-origin:left center;">Details</span><span style="left:662px;top:45.65px;line-height:10px;font-size:6px;color:#7c7c7c;font-weight:400;">×</span><svg style="left:611px;top:47.2px" width="7" height="7" viewBox="0 0 7 7"><circle cx="3" cy="3" r="2.3" fill="#8c8c8c" stroke="#4a58c0" stroke-width=".9"/><path d="M4.7 4.9 L6.4 6.6" stroke="#3c48a0" stroke-width="1.2"/></svg><div style="left:608.5px;top:55px;width:169.5px;height:251.5px;background:#5e5e5e;border-left:1px solid #4a4a4a;box-sizing:border-box"></div><div style="left:609.5px;top:55.2px;width:81px;height:8px;background:#e0e0e0;border-radius:1px"></div><span style="left:611.9px;top:54.10px;line-height:10px;font-size:5.8px;color:#9a9a9a;font-weight:400;transform:scaleX(0.782);transform-origin:left center;">Name</span><div style="left:693.3px;top:56px;width:6px;height:6px;background:#a9a9a9;border-radius:1px"></div><span style="left:700.7px;top:54.10px;line-height:10px;font-size:5.8px;color:#d8d8d8;font-weight:400;transform:scaleX(0.849);transform-origin:left center;">Is Variable</span><svg style="left:120px;top:308.7px" width="65" height="8.3" viewBox="0 0 65 8.3"><path d="M0 8.3 L0 1.5 Q0 0 1.5 0 L59 0 Q61 0 61 1.5 L61 8.3 Z" fill="#595959"/></svg><span style="left:130.8px;top:307.35px;line-height:10px;font-size:5.8px;color:#bcbcbc;font-weight:400;transform:scaleX(0.848);transform-origin:left center;">Timeline</span><span style="left:174px;top:307.85px;line-height:10px;font-size:6px;color:#7c7c7c;font-weight:400;">×</span><svg style="left:121.5px;top:310px" width="7" height="6" viewBox="0 0 7 6"><rect x="0" y="1" width="6.5" height="4" fill="#9fb0e8"/><path d="M0 2.2h6.5M0 3.8h6.5" stroke="#fff" stroke-width=".5"/></svg><svg style="left:182.5px;top:308.7px" width="64" height="8.3" viewBox="0 0 64 8.3"><path d="M0 8.3 L0 1.5 Q0 0 1.5 0 L58 0 Q60 0 60 1.5 L60 8.3 Z" fill="#3d3d3d"/></svg><span style="left:192px;top:307.35px;line-height:10px;font-size:5.8px;color:#cfcfcf;font-weight:400;transform:scaleX(0.833);transform-origin:left center;">Compiler Results</span><span style="left:235.5px;top:307.85px;line-height:10px;font-size:6px;color:#7c7c7c;font-weight:400;">×</span><svg style="left:184px;top:309.8px" width="6" height="6.5" viewBox="0 0 6 6.5"><rect x="0" y="0" width="5.2" height="6.2" fill="#3a5ac0"/><path d="M1 1.5h3M1 3h2M3 3.2l1.4 2" stroke="#fff" stroke-width=".7"/></svg><div style="left:118.5px;top:317px;width:659.5px;height:103.5px;background:#212121;"></div><div style="left:119.5px;top:317px;width:656.5px;height:102.5px;background:#444;"></div><div style="left:119.5px;top:316.6px;width:656.5px;height:0.8px;background:#585858;"></div><div style="left:119.5px;top:317px;width:656.5px;height:13.6px;background:#414141;"></div><div style="left:120px;top:330.6px;width:197.5px;height:75.6px;background:#5b5b5b;"></div><div style="left:120px;top:406.2px;width:197.5px;height:13.2px;background:#464646;"></div><div style="left:317.3px;top:330.6px;width:0.8px;height:89px;background:#686868;"></div><div style="left:121.5px;top:332.2px;width:23.5px;height:7.6px;background:#6f8a70;border-radius:1px"></div><span style="left:123px;top:331.20px;line-height:10px;font-size:5.6px;color:#9db09d;font-weight:700;transform:scaleX(0.8);transform-origin:left center;">+ Add ▾</span><div style="left:146.5px;top:332.4px;width:168.5px;height:7.2px;background:#8a8a8a;border-radius:1px"></div><span style="left:148.5px;top:331.20px;line-height:10px;font-size:5.4px;color:#a4a4a4;font-weight:400;transform:scaleX(0.85);transform-origin:left center;">Filter</span><svg style="left:306.9px;top:332.3px" width="8" height="8" viewBox="0 0 8 8"><circle cx="4.8" cy="3.2" r="2.1" fill="none" stroke="#1a1a1a" stroke-width="1.05"/><path d="M3.3 4.9 L1.3 7.1" stroke="#1a1a1a" stroke-width="1.4"/></svg><svg style="left:121px;top:318px" width="80" height="12" viewBox="0 0 80 12"><g fill="none" stroke="#777" stroke-width=".9"><path d="M3.6 5.6 Q7.4 1.6 11.2 5.6 Q7.4 9.6 3.6 5.6Z"/><circle cx="7.4" cy="5.6" r="1.3"/><path d="M4.8 9.8h5.2"/></g><path d="M13.200000000000001 5.2l1.2 1.4 1.2-1.4z" fill="#8a8a8a"/><path d="M24.4 3 L29.4 5.9 L24.4 8.8Z" fill="#7f7f7f"/><path d="M32.199999999999996 5.2l1.2 1.4 1.2-1.4z" fill="#8a8a8a"/><rect x="43.3" y="3.4" width="5" height="5" fill="none" stroke="#6a6a6a" stroke-width=".8"/><path d="M51.8 5.2l1.2 1.4 1.2-1.4z" fill="#8a8a8a"/><path d="M57.5 1.5v9" stroke="#2e2e2e" stroke-width=".7"/><g fill="#b5b5b5"><path d="M66.9 1.2l1.8 2.2h-3.6zM66.9 10.6l1.8-2.2h-3.6zM62.2 5.9l2.2-1.8v3.6zM71.6 5.9l-2.2-1.8v3.6z"/><circle cx="66.9" cy="5.9" r="1"/><path d="M66.5 3h.8v5.8h-.8zM64 5.5h5.8v.8H64z"/></g><path d="M72.3 5.2l1.2 1.4 1.2-1.4z" fill="#8a8a8a"/><path d="M77.5 1.5v9" stroke="#2e2e2e" stroke-width=".7"/></svg><div style="left:202.5px;top:318.6px;width:13px;height:11.2px;background:#b3938a;border:.6px solid #c9a79c;box-sizing:border-box"></div><svg style="left:204.5px;top:320.2px" width="9" height="8" viewBox="0 0 9 8"><path d="M1.5 7.5 V4 A3 3 0 0 1 7.5 4 V7.5 H5.8 V4 A1.3 1.3 0 0 0 3.2 4 V7.5Z" fill="#8d7a76"/></svg><svg style="left:219px;top:318px" width="60" height="12" viewBox="0 0 60 12"><path d="M2 5l1.1 1.3 1.1-1.3z" fill="#a0a0a0"/>
<path d="M9.2 1.5v9" stroke="#333" stroke-width=".7"/>
<circle cx="15" cy="5.8" r="3.4" fill="none" stroke="#777" stroke-width=".8"/><path d="M15 3.4v2.4h2" fill="none" stroke="#777" stroke-width=".7"/>
<path d="M52.4 1.5v9" stroke="#333" stroke-width=".7"/></svg><div style="left:243.2px;top:319.8px;width:25.6px;height:8px;background:#8b8b8b;border-radius:.6px"></div><span style="left:245.3px;top:318.90px;line-height:10px;font-size:5.4px;color:#e0e0e0;font-weight:400;transform:scaleX(0.894);transform-origin:left center;">0.05</span><div style="left:261.8px;top:319.8px;width:7px;height:8px;background:#6f6f6f;"></div><span style="left:263.2px;top:319.00px;line-height:10px;font-size:5px;color:#111;font-weight:400;">▾</span><svg style="left:275px;top:318.6px" width="12" height="12" viewBox="0 0 12 12"><path d="M1.6 1.6v8.6M1.6 2 L7 9.6 M7 1.8v7.8" fill="none" stroke="#b0b0b0" stroke-width=".7"/><path d="M5.6 3.2l1.4-1.6 1.4 1.6M8.2 7l1.8-1.2v2.4z" fill="#b0b0b0"/></svg><svg style="left:163px;top:408.5px" width="108" height="9" viewBox="0 0 108 9"><g fill="#a8a8a8"><g transform="translate(3.8 4.4)"><path d="M-.5 -3.6h1v7.2h-1zM-.5 -3.6h1.8v.8H-.5zM-.5 2.8h1.8v.8H-.5z"/></g><g transform="translate(13.2 4.4)"><path d="M-3.6 -2.6h.9v5.2h-.9zM1 -2.6v5.2L-2.4 0zM1.6 -2.6h.9v5.2h-.9zM3.2 -2.6h.9v5.2h-.9z"/></g><g transform="translate(23.2 4.4)"><path d="M.2 -2.4v4.8L-3.2 0z"/><circle cx="2" cy="0" r="1.4" fill="none" stroke="#a8a8a8" stroke-width=".8"/></g><g transform="translate(32.9 4.4)"><path d="M.6 -2.4v4.8L-2.8 0zM1.4 -2.5h1v5h-1z"/></g><g transform="translate(42.9 4.4)"><path d="M2.6 -3.2v6.4L-2.6 0z"/></g><g transform="translate(54.9 4.4)"><path d="M-2.8 -3.6v7.2L3 0z" fill="#cacaca"/></g><g transform="translate(65.6 4.4)"><path d="M-.6 -2.4v4.8L2.8 0zM-2.4 -2.5h1v5h-1z"/></g><g transform="translate(75 4.4)"><path d="M-.2 -2.4v4.8L3.2 0z"/><circle cx="-2" cy="0" r="1.4" fill="none" stroke="#a8a8a8" stroke-width=".8"/></g><g transform="translate(85 4.4)"><path d="M-4.1 -2.6h.9v5.2h-.9zM-2.5 -2.6h.9v5.2h-.9zM-1 -2.6v5.2L2.4 0zM2.7 -2.6h.9v5.2h-.9z"/></g><g transform="translate(94 4.4)"><path d="M-.5 -3.6h1v7.2h-1zM-1.3 -3.6h1.8v.8h-1.8zM-1.3 2.8h1.8v.8h-1.8z"/></g><g transform="translate(101.7 4.4)"><path d="M-2.8 -.4h3.6v.8h-3.6zM.4 -1.6l2.2 1.6-2.2 1.6z"/></g></g></svg><div style="left:318.5px;top:330.6px;width:38px;height:89px;background:#2b2b2b;"></div><div style="left:356.5px;top:330.2px;width:419.5px;height:11.3px;background:#3a3a3a;"></div><div style="left:356.5px;top:406.2px;width:419.5px;height:13.2px;background:#353535;"></div><div style="left:738.5px;top:330.6px;width:37.5px;height:89px;background:#333;"></div><div style="left:738.5px;top:330.2px;width:37.5px;height:11.3px;background:#2b2b2b;"></div><div style="left:738.5px;top:406.2px;width:37.5px;height:13.2px;background:#2e2e2e;"></div><div style="left:355.75px;top:337.7px;width:0.7px;height:3.8px;background:#808080;"></div><div style="left:355.75px;top:406.2px;width:0.7px;height:3.8px;background:#808080;"></div><span style="left:358.5px;top:334.00px;line-height:10px;font-size:4.3px;color:#7d7d7d;font-weight:400;transform:scaleX(0.9);transform-origin:left center;">0.00</span><span style="left:358.5px;top:404.40px;line-height:10px;font-size:4.3px;color:#7d7d7d;font-weight:400;transform:scaleX(0.9);transform-origin:left center;">0.00</span><div style="left:363.43px;top:340.6px;width:0.7px;height:0.9px;background:#5c5c5c;"></div><div style="left:363.43px;top:406.2px;width:0.7px;height:0.9px;background:#5c5c5c;"></div><div style="left:371.11px;top:340.6px;width:0.7px;height:0.9px;background:#5c5c5c;"></div><div style="left:371.11px;top:406.2px;width:0.7px;height:0.9px;background:#5c5c5c;"></div><div style="left:378.79px;top:340.6px;width:0.7px;height:0.9px;background:#5c5c5c;"></div><div style="left:378.79px;top:406.2px;width:0.7px;height:0.9px;background:#5c5c5c;"></div><div style="left:386.47px;top:340.6px;width:0.7px;height:0.9px;background:#5c5c5c;"></div><div style="left:386.47px;top:406.2px;width:0.7px;height:0.9px;background:#5c5c5c;"></div><div style="left:394.15px;top:339.1px;width:0.7px;height:2.4px;background:#6c6c6c;"></div><div style="left:394.15px;top:406.2px;width:0.7px;height:2.4px;background:#6c6c6c;"></div><div style="left:401.83px;top:340.6px;width:0.7px;height:0.9px;background:#5c5c5c;"></div><div style="left:401.83px;top:406.2px;width:0.7px;height:0.9px;background:#5c5c5c;"></div><div style="left:409.51px;top:340.6px;width:0.7px;height:0.9px;background:#5c5c5c;"></div><div style="left:409.51px;top:406.2px;width:0.7px;height:0.9px;background:#5c5c5c;"></div><div style="left:417.19px;top:340.6px;width:0.7px;height:0.9px;background:#5c5c5c;"></div><div style="left:417.19px;top:406.2px;width:0.7px;height:0.9px;background:#5c5c5c;"></div><div style="left:424.87px;top:340.6px;width:0.7px;height:0.9px;background:#5c5c5c;"></div><div style="left:424.87px;top:406.2px;width:0.7px;height:0.9px;background:#5c5c5c;"></div><div style="left:432.55px;top:341.5px;width:0.7px;height:64.7px;background:#3a3a3a;"></div><div style="left:432.55px;top:337.7px;width:0.7px;height:3.8px;background:#808080;"></div><div style="left:432.55px;top:406.2px;width:0.7px;height:3.8px;background:#808080;"></div><span style="left:435.3px;top:334.00px;line-height:10px;font-size:4.3px;color:#7d7d7d;font-weight:400;transform:scaleX(0.9);transform-origin:left center;">1.00</span><span style="left:435.3px;top:404.40px;line-height:10px;font-size:4.3px;color:#7d7d7d;font-weight:400;transform:scaleX(0.9);transform-origin:left center;">1.00</span><div style="left:440.23px;top:340.6px;width:0.7px;height:0.9px;background:#5c5c5c;"></div><div style="left:440.23px;top:406.2px;width:0.7px;height:0.9px;background:#5c5c5c;"></div><div style="left:447.90999999999997px;top:340.6px;width:0.7px;height:0.9px;background:#5c5c5c;"></div><div style="left:447.90999999999997px;top:406.2px;width:0.7px;height:0.9px;background:#5c5c5c;"></div><div style="left:455.59000000000003px;top:340.6px;width:0.7px;height:0.9px;background:#5c5c5c;"></div><div style="left:455.59000000000003px;top:406.2px;width:0.7px;height:0.9px;background:#5c5c5c;"></div><div style="left:463.27px;top:340.6px;width:0.7px;height:0.9px;background:#5c5c5c;"></div><div style="left:463.27px;top:406.2px;width:0.7px;height:0.9px;background:#5c5c5c;"></div><div style="left:470.95px;top:339.1px;width:0.7px;height:2.4px;background:#6c6c6c;"></div><div style="left:470.95px;top:406.2px;width:0.7px;height:2.4px;background:#6c6c6c;"></div><div style="left:478.63px;top:340.6px;width:0.7px;height:0.9px;background:#5c5c5c;"></div><div style="left:478.63px;top:406.2px;width:0.7px;height:0.9px;background:#5c5c5c;"></div><div style="left:486.31px;top:340.6px;width:0.7px;height:0.9px;background:#5c5c5c;"></div><div style="left:486.31px;top:406.2px;width:0.7px;height:0.9px;background:#5c5c5c;"></div><div style="left:493.99px;top:340.6px;width:0.7px;height:0.9px;background:#5c5c5c;"></div><div style="left:493.99px;top:406.2px;width:0.7px;height:0.9px;background:#5c5c5c;"></div><div style="left:501.66999999999996px;top:340.6px;width:0.7px;height:0.9px;background:#5c5c5c;"></div><div style="left:501.66999999999996px;top:406.2px;width:0.7px;height:0.9px;background:#5c5c5c;"></div><div style="left:509.35px;top:341.5px;width:0.7px;height:64.7px;background:#3a3a3a;"></div><div style="left:509.35px;top:337.7px;width:0.7px;height:3.8px;background:#808080;"></div><div style="left:509.35px;top:406.2px;width:0.7px;height:3.8px;background:#808080;"></div><span style="left:512.1px;top:334.00px;line-height:10px;font-size:4.3px;color:#7d7d7d;font-weight:400;transform:scaleX(0.9);transform-origin:left center;">2.00</span><span style="left:512.1px;top:404.40px;line-height:10px;font-size:4.3px;color:#7d7d7d;font-weight:400;transform:scaleX(0.9);transform-origin:left center;">2.00</span><div style="left:517.03px;top:340.6px;width:0.7px;height:0.9px;background:#5c5c5c;"></div><div style="left:517.03px;top:406.2px;width:0.7px;height:0.9px;background:#5c5c5c;"></div><div style="left:524.7099999999999px;top:340.6px;width:0.7px;height:0.9px;background:#5c5c5c;"></div><div style="left:524.7099999999999px;top:406.2px;width:0.7px;height:0.9px;background:#5c5c5c;"></div><div style="left:532.39px;top:340.6px;width:0.7px;height:0.9px;background:#5c5c5c;"></div><div style="left:532.39px;top:406.2px;width:0.7px;height:0.9px;background:#5c5c5c;"></div><div style="left:540.07px;top:340.6px;width:0.7px;height:0.9px;background:#5c5c5c;"></div><div style="left:540.07px;top:406.2px;width:0.7px;height:0.9px;background:#5c5c5c;"></div><div style="left:547.75px;top:339.1px;width:0.7px;height:2.4px;background:#6c6c6c;"></div><div style="left:547.75px;top:406.2px;width:0.7px;height:2.4px;background:#6c6c6c;"></div><div style="left:555.43px;top:340.6px;width:0.7px;height:0.9px;background:#5c5c5c;"></div><div style="left:555.43px;top:406.2px;width:0.7px;height:0.9px;background:#5c5c5c;"></div><div style="left:563.11px;top:340.6px;width:0.7px;height:0.9px;background:#5c5c5c;"></div><div style="left:563.11px;top:406.2px;width:0.7px;height:0.9px;background:#5c5c5c;"></div><div style="left:570.79px;top:340.6px;width:0.7px;height:0.9px;background:#5c5c5c;"></div><div style="left:570.79px;top:406.2px;width:0.7px;height:0.9px;background:#5c5c5c;"></div><div style="left:578.47px;top:340.6px;width:0.7px;height:0.9px;background:#5c5c5c;"></div><div style="left:578.47px;top:406.2px;width:0.7px;height:0.9px;background:#5c5c5c;"></div><div style="left:586.15px;top:341.5px;width:0.7px;height:64.7px;background:#3a3a3a;"></div><div style="left:586.15px;top:337.7px;width:0.7px;height:3.8px;background:#808080;"></div><div style="left:586.15px;top:406.2px;width:0.7px;height:3.8px;background:#808080;"></div><span style="left:588.9px;top:334.00px;line-height:10px;font-size:4.3px;color:#7d7d7d;font-weight:400;transform:scaleX(0.9);transform-origin:left center;">3.00</span><span style="left:588.9px;top:404.40px;line-height:10px;font-size:4.3px;color:#7d7d7d;font-weight:400;transform:scaleX(0.9);transform-origin:left center;">3.00</span><div style="left:593.83px;top:340.6px;width:0.7px;height:0.9px;background:#5c5c5c;"></div><div style="left:593.83px;top:406.2px;width:0.7px;height:0.9px;background:#5c5c5c;"></div><div style="left:601.51px;top:340.6px;width:0.7px;height:0.9px;background:#5c5c5c;"></div><div style="left:601.51px;top:406.2px;width:0.7px;height:0.9px;background:#5c5c5c;"></div><div style="left:609.1899999999999px;top:340.6px;width:0.7px;height:0.9px;background:#5c5c5c;"></div><div style="left:609.1899999999999px;top:406.2px;width:0.7px;height:0.9px;background:#5c5c5c;"></div><div style="left:616.87px;top:340.6px;width:0.7px;height:0.9px;background:#5c5c5c;"></div><div style="left:616.87px;top:406.2px;width:0.7px;height:0.9px;background:#5c5c5c;"></div><div style="left:624.5500000000001px;top:339.1px;width:0.7px;height:2.4px;background:#6c6c6c;"></div><div style="left:624.5500000000001px;top:406.2px;width:0.7px;height:2.4px;background:#6c6c6c;"></div><div style="left:632.23px;top:340.6px;width:0.7px;height:0.9px;background:#5c5c5c;"></div><div style="left:632.23px;top:406.2px;width:0.7px;height:0.9px;background:#5c5c5c;"></div><div style="left:639.91px;top:340.6px;width:0.7px;height:0.9px;background:#5c5c5c;"></div><div style="left:639.91px;top:406.2px;width:0.7px;height:0.9px;background:#5c5c5c;"></div><div style="left:647.59px;top:340.6px;width:0.7px;height:0.9px;background:#5c5c5c;"></div><div style="left:647.59px;top:406.2px;width:0.7px;height:0.9px;background:#5c5c5c;"></div><div style="left:655.27px;top:340.6px;width:0.7px;height:0.9px;background:#5c5c5c;"></div><div style="left:655.27px;top:406.2px;width:0.7px;height:0.9px;background:#5c5c5c;"></div><div style="left:662.9499999999999px;top:341.5px;width:0.7px;height:64.7px;background:#3a3a3a;"></div><div style="left:662.9499999999999px;top:337.7px;width:0.7px;height:3.8px;background:#808080;"></div><div style="left:662.9499999999999px;top:406.2px;width:0.7px;height:3.8px;background:#808080;"></div><span style="left:665.6999999999999px;top:334.00px;line-height:10px;font-size:4.3px;color:#7d7d7d;font-weight:400;transform:scaleX(0.9);transform-origin:left center;">4.00</span><span style="left:665.6999999999999px;top:404.40px;line-height:10px;font-size:4.3px;color:#7d7d7d;font-weight:400;transform:scaleX(0.9);transform-origin:left center;">4.00</span><div style="left:670.63px;top:340.6px;width:0.7px;height:0.9px;background:#5c5c5c;"></div><div style="left:670.63px;top:406.2px;width:0.7px;height:0.9px;background:#5c5c5c;"></div><div style="left:678.3100000000001px;top:340.6px;width:0.7px;height:0.9px;background:#5c5c5c;"></div><div style="left:678.3100000000001px;top:406.2px;width:0.7px;height:0.9px;background:#5c5c5c;"></div><div style="left:685.99px;top:340.6px;width:0.7px;height:0.9px;background:#5c5c5c;"></div><div style="left:685.99px;top:406.2px;width:0.7px;height:0.9px;background:#5c5c5c;"></div><div style="left:693.67px;top:340.6px;width:0.7px;height:0.9px;background:#5c5c5c;"></div><div style="left:693.67px;top:406.2px;width:0.7px;height:0.9px;background:#5c5c5c;"></div><div style="left:701.35px;top:339.1px;width:0.7px;height:2.4px;background:#6c6c6c;"></div><div style="left:701.35px;top:406.2px;width:0.7px;height:2.4px;background:#6c6c6c;"></div><div style="left:709.03px;top:340.6px;width:0.7px;height:0.9px;background:#5c5c5c;"></div><div style="left:709.03px;top:406.2px;width:0.7px;height:0.9px;background:#5c5c5c;"></div><div style="left:716.7099999999999px;top:340.6px;width:0.7px;height:0.9px;background:#5c5c5c;"></div><div style="left:716.7099999999999px;top:406.2px;width:0.7px;height:0.9px;background:#5c5c5c;"></div><div style="left:724.39px;top:340.6px;width:0.7px;height:0.9px;background:#5c5c5c;"></div><div style="left:724.39px;top:406.2px;width:0.7px;height:0.9px;background:#5c5c5c;"></div><div style="left:732.07px;top:340.6px;width:0.7px;height:0.9px;background:#5c5c5c;"></div><div style="left:732.07px;top:406.2px;width:0.7px;height:0.9px;background:#5c5c5c;"></div><div style="left:739.75px;top:337.7px;width:0.7px;height:3.8px;background:#484848;"></div><div style="left:739.75px;top:406.2px;width:0.7px;height:3.8px;background:#484848;"></div><span style="left:742.5px;top:334.00px;line-height:10px;font-size:4.3px;color:#5a5a5a;font-weight:400;transform:scaleX(0.9);transform-origin:left center;">5.00</span><span style="left:742.5px;top:404.40px;line-height:10px;font-size:4.3px;color:#5a5a5a;font-weight:400;transform:scaleX(0.9);transform-origin:left center;">5.00</span><div style="left:747.43px;top:340.6px;width:0.7px;height:0.9px;background:#484848;"></div><div style="left:747.43px;top:406.2px;width:0.7px;height:0.9px;background:#484848;"></div><div style="left:755.11px;top:340.6px;width:0.7px;height:0.9px;background:#484848;"></div><div style="left:755.11px;top:406.2px;width:0.7px;height:0.9px;background:#484848;"></div><div style="left:762.79px;top:340.6px;width:0.7px;height:0.9px;background:#484848;"></div><div style="left:762.79px;top:406.2px;width:0.7px;height:0.9px;background:#484848;"></div><div style="left:770.4699999999999px;top:340.6px;width:0.7px;height:0.9px;background:#484848;"></div><div style="left:770.4699999999999px;top:406.2px;width:0.7px;height:0.9px;background:#484848;"></div><div style="left:356px;top:330.6px;width:0.8px;height:89px;background:#9a9a9a;"></div><div style="left:354.4px;top:331px;width:3.6px;height:9.6px;background:#8a7676;border-radius:1px"></div><div style="left:354.4px;top:408px;width:3.6px;height:11px;background:#8a7676;border-radius:1px"></div><span style="left:360.8px;top:329.90px;line-height:10px;font-size:5.2px;color:#bcbcbc;font-weight:400;transform:scaleX(0.929);transform-origin:left center;">0.00</span><span style="left:360.8px;top:408.20px;line-height:10px;font-size:5.2px;color:#bcbcbc;font-weight:400;transform:scaleX(0.929);transform-origin:left center;">0.00</span><div style="left:738px;top:330.6px;width:0.7px;height:89px;background:#8c3c22;"></div><svg style="left:736.8px;top:330.2px" width="3" height="2" viewBox="0 0 3 2"><path d="M0 0H3L1.5 1.8Z" fill="#8c3c22"/></svg><span style="left:397.6px;top:363.50px;line-height:10px;font-size:10px;color:#e4e4e4;font-weight:400;transform:scaleX(0.994);transform-origin:left center;">No Animation Selected</span><div style="left:0px;top:420.3px;width:778px;height:16.7px;background:#050206;"></div><div style="left:119.5px;top:420.3px;width:18.5px;height:16.7px;background:#2b2b2b;"></div><div style="left:81px;top:435.6px;width:16px;height:1.4px;background:#c69ad6;"></div><div style="left:100.5px;top:435.6px;width:16.5px;height:1.4px;background:#c69ad6;"></div><div style="left:119.5px;top:435.6px;width:18.5px;height:1.4px;background:#c69ad6;"></div><svg style="left:5.5px;top:424.5px" width="8" height="8" viewBox="0 0 8 8"><path d="M0 1.2L3.4 .7v3H0zM3.9 .6L8 0v3.7H3.9zM0 4.2h3.4v3L0 6.7zM3.9 4.2H8V8l-4.1-.6z" fill="#fff"/></svg><svg style="left:25px;top:424.5px" width="8" height="8" viewBox="0 0 8 8"><circle cx="4.8" cy="3" r="2.3" fill="none" stroke="#fff" stroke-width=".8"/><path d="M3.2 4.8L.8 7.4" stroke="#fff" stroke-width=".9"/></svg><svg style="left:44px;top:425px" width="9" height="7" viewBox="0 0 9 7"><rect x="1.8" y=".8" width="5.4" height="5" fill="none" stroke="#fff" stroke-width=".8"/><path d="M.4 1.8v3M8.6 1.8v3" stroke="#fff" stroke-width=".7"/></svg><svg style="left:64.5px;top:424px" width="10" height="9" viewBox="0 0 10 9"><path d="M.5 1h3l.8 1h5.2v6.4H.5z" fill="#f2c64a"/><rect x="2" y="4.2" width="6" height="4" fill="#5ab0e8"/><rect x="3" y="5.6" width="4" height="2.6" fill="#f6e6a8"/></svg><svg style="left:84.5px;top:424px" width="9" height="9" viewBox="0 0 9 9"><circle cx="4.5" cy="4.5" r="4.3" fill="#e24a3a"/><path d="M4.5 4.5L.8 2.4A4.3 4.3 0 0 0 4.5 8.8L6.6 5.4z" fill="#3aa856"/><path d="M4.5 4.5L6.6 5.4 4.5 8.8A4.3 4.3 0 0 0 8.6 3.2H5z" fill="#f4c632"/><circle cx="4.5" cy="4.5" r="2" fill="#fff"/><circle cx="4.5" cy="4.5" r="1.5" fill="#3f82e8"/></svg><svg style="left:105px;top:424.3px" width="8" height="9" viewBox="0 0 8 9"><rect x="0" y="0" width="7.4" height="5.2" fill="#ddd"/><path d="M1 1.4h5.4M1 2.8h5.4M2.6 .6v4M4.8 .6v4" stroke="#222" stroke-width=".6"/><path d="M1.4 6.6h4.6M2.6 8h2.2" stroke="#ddd" stroke-width=".8"/></svg><svg style="left:124px;top:424px" width="9" height="9" viewBox="0 0 9 9"><circle cx="4.5" cy="4.5" r="4" fill="none" stroke="#eee" stroke-width=".8"/><text x="2" y="7" font-size="6.4" font-weight="700" fill="#eee" font-family="Liberation Serif,serif">U</text></svg><svg style="left:703.5px;top:426px" width="6" height="5" viewBox="0 0 6 5"><path d="M.6 3.8L3 1.2 5.4 3.8" fill="none" stroke="#eee" stroke-width=".8"/></svg><svg style="left:712.5px;top:425.5px" width="8" height="7" viewBox="0 0 8 7"><rect x="1.6" y=".6" width="5.6" height="3.8" fill="none" stroke="#eee" stroke-width=".8"/><rect x=".4" y="2.6" width="3.4" height="2.6" fill="#050206" stroke="#eee" stroke-width=".7"/></svg><svg style="left:722px;top:425.5px" width="8" height="7" viewBox="0 0 8 7"><path d="M.4 2.4h1.4L3.6.8v5.4L1.8 4.6H.4z" fill="#eee"/><path d="M4.8 1.6v4M6 1v5.2" stroke="#bbb" stroke-width=".6"/></svg><span style="left:733.5px;top:420.10px;line-height:10px;font-size:5.4px;color:#f0f0f0;font-weight:400;transform:scaleX(0.877);transform-origin:left center;">10:56 AM</span><span style="left:733.5px;top:427.50px;line-height:10px;font-size:5.4px;color:#f0f0f0;font-weight:400;transform:scaleX(0.853);transform-origin:left center;">3/21/2017</span><svg style="left:760.5px;top:425px" width="8" height="8" viewBox="0 0 8 8"><path d="M.6 .6h6.8v5H4.6L3.2 7.2V5.6H.6z" fill="none" stroke="#eee" stroke-width=".8"/></svg>
<div style="left:118.5px;top:46.3px;width:487.5px;height:260.5px;background:#2a2a2a;border:1px solid #4a4a4a;box-sizing:border-box;"></div><svg style="left:126.5px;top:53.4px;overflow:hidden" width="478.5" height="252.4"><path d="M6.20 0V252.4" stroke="#353535" stroke-width="0.7"/><path d="M12.66 0V252.4" stroke="#353535" stroke-width="0.7"/><path d="M19.13 0V252.4" stroke="#353535" stroke-width="0.7"/><path d="M25.60 0V252.4" stroke="#353535" stroke-width="0.7"/><path d="M32.07 0V252.4" stroke="#353535" stroke-width="0.7"/><path d="M38.53 0V252.4" stroke="#353535" stroke-width="0.7"/><path d="M44.50 0V252.4" stroke="#0c0c0c" stroke-width="1"/><path d="M51.47 0V252.4" stroke="#353535" stroke-width="0.7"/><path d="M57.93 0V252.4" stroke="#353535" stroke-width="0.7"/><path d="M64.40 0V252.4" stroke="#353535" stroke-width="0.7"/><path d="M70.87 0V252.4" stroke="#353535" stroke-width="0.7"/><path d="M77.34 0V252.4" stroke="#353535" stroke-width="0.7"/><path d="M83.80 0V252.4" stroke="#353535" stroke-width="0.7"/><path d="M90.27 0V252.4" stroke="#353535" stroke-width="0.7"/><path d="M96.74 0V252.4" stroke="#353535" stroke-width="0.7"/><path d="M103.20 0V252.4" stroke="#353535" stroke-width="0.7"/><path d="M109.67 0V252.4" stroke="#1b1b1b" stroke-width="0.9"/><path d="M116.14 0V252.4" stroke="#353535" stroke-width="0.7"/><path d="M122.60 0V252.4" stroke="#353535" stroke-width="0.7"/><path d="M129.07 0V252.4" stroke="#353535" stroke-width="0.7"/><path d="M135.54 0V252.4" stroke="#353535" stroke-width="0.7"/><path d="M142.00 0V252.4" stroke="#353535" stroke-width="0.7"/><path d="M148.47 0V252.4" stroke="#353535" stroke-width="0.7"/><path d="M154.94 0V252.4" stroke="#353535" stroke-width="0.7"/><path d="M161.41 0V252.4" stroke="#353535" stroke-width="0.7"/><path d="M167.87 0V252.4" stroke="#353535" stroke-width="0.7"/><path d="M174.34 0V252.4" stroke="#1b1b1b" stroke-width="0.9"/><path d="M180.81 0V252.4" stroke="#353535" stroke-width="0.7"/><path d="M187.27 0V252.4" stroke="#353535" stroke-width="0.7"/><path d="M193.74 0V252.4" stroke="#353535" stroke-width="0.7"/><path d="M200.21 0V252.4" stroke="#353535" stroke-width="0.7"/><path d="M206.67 0V252.4" stroke="#353535" stroke-width="0.7"/><path d="M213.14 0V252.4" stroke="#353535" stroke-width="0.7"/><path d="M219.61 0V252.4" stroke="#353535" stroke-width="0.7"/><path d="M226.08 0V252.4" stroke="#353535" stroke-width="0.7"/><path d="M232.54 0V252.4" stroke="#353535" stroke-width="0.7"/><path d="M239.01 0V252.4" stroke="#1b1b1b" stroke-width="0.9"/><path d="M245.48 0V252.4" stroke="#353535" stroke-width="0.7"/><path d="M251.94 0V252.4" stroke="#353535" stroke-width="0.7"/><path d="M258.41 0V252.4" stroke="#353535" stroke-width="0.7"/><path d="M264.88 0V252.4" stroke="#353535" stroke-width="0.7"/><path d="M271.35 0V252.4" stroke="#353535" stroke-width="0.7"/><path d="M277.81 0V252.4" stroke="#353535" stroke-width="0.7"/><path d="M284.28 0V252.4" stroke="#353535" stroke-width="0.7"/><path d="M290.75 0V252.4" stroke="#353535" stroke-width="0.7"/><path d="M297.21 0V252.4" stroke="#353535" stroke-width="0.7"/><path d="M303.68 0V252.4" stroke="#1b1b1b" stroke-width="0.9"/><path d="M310.15 0V252.4" stroke="#353535" stroke-width="0.7"/><path d="M316.61 0V252.4" stroke="#353535" stroke-width="0.7"/><path d="M323.08 0V252.4" stroke="#353535" stroke-width="0.7"/><path d="M329.55 0V252.4" stroke="#353535" stroke-width="0.7"/><path d="M336.01 0V252.4" stroke="#353535" stroke-width="0.7"/><path d="M342.48 0V252.4" stroke="#353535" stroke-width="0.7"/><path d="M348.95 0V252.4" stroke="#353535" stroke-width="0.7"/><path d="M355.42 0V252.4" stroke="#353535" stroke-width="0.7"/><path d="M361.88 0V252.4" stroke="#353535" stroke-width="0.7"/><path d="M368.35 0V252.4" stroke="#1b1b1b" stroke-width="0.9"/><path d="M374.82 0V252.4" stroke="#353535" stroke-width="0.7"/><path d="M381.28 0V252.4" stroke="#353535" stroke-width="0.7"/><path d="M387.75 0V252.4" stroke="#353535" stroke-width="0.7"/><path d="M394.22 0V252.4" stroke="#353535" stroke-width="0.7"/><path d="M400.68 0V252.4" stroke="#353535" stroke-width="0.7"/><path d="M407.15 0V252.4" stroke="#353535" stroke-width="0.7"/><path d="M413.62 0V252.4" stroke="#353535" stroke-width="0.7"/><path d="M420.09 0V252.4" stroke="#353535" stroke-width="0.7"/><path d="M426.55 0V252.4" stroke="#353535" stroke-width="0.7"/><path d="M433.02 0V252.4" stroke="#1b1b1b" stroke-width="0.9"/><path d="M439.49 0V252.4" stroke="#353535" stroke-width="0.7"/><path d="M445.95 0V252.4" stroke="#353535" stroke-width="0.7"/><path d="M452.42 0V252.4" stroke="#353535" stroke-width="0.7"/><path d="M458.89 0V252.4" stroke="#353535" stroke-width="0.7"/><path d="M465.36 0V252.4" stroke="#353535" stroke-width="0.7"/><path d="M471.82 0V252.4" stroke="#353535" stroke-width="0.7"/><path d="M478.29 0V252.4" stroke="#353535" stroke-width="0.7"/><path d="M0 6.17H478.5" stroke="#353535" stroke-width="0.7"/><path d="M0 12.63H478.5" stroke="#353535" stroke-width="0.7"/><path d="M0 19.30H478.5" stroke="#0c0c0c" stroke-width="1"/><path d="M0 25.57H478.5" stroke="#353535" stroke-width="0.7"/><path d="M0 32.03H478.5" stroke="#353535" stroke-width="0.7"/><path d="M0 38.50H478.5" stroke="#353535" stroke-width="0.7"/><path d="M0 44.97H478.5" stroke="#353535" stroke-width="0.7"/><path d="M0 51.44H478.5" stroke="#353535" stroke-width="0.7"/><path d="M0 57.90H478.5" stroke="#353535" stroke-width="0.7"/><path d="M0 64.37H478.5" stroke="#353535" stroke-width="0.7"/><path d="M0 70.84H478.5" stroke="#353535" stroke-width="0.7"/><path d="M0 77.30H478.5" stroke="#353535" stroke-width="0.7"/><path d="M0 83.77H478.5" stroke="#1b1b1b" stroke-width="0.9"/><path d="M0 90.24H478.5" stroke="#353535" stroke-width="0.7"/><path d="M0 96.70H478.5" stroke="#353535" stroke-width="0.7"/><path d="M0 103.17H478.5" stroke="#353535" stroke-width="0.7"/><path d="M0 109.64H478.5" stroke="#353535" stroke-width="0.7"/><path d="M0 116.10H478.5" stroke="#353535" stroke-width="0.7"/><path d="M0 122.57H478.5" stroke="#353535" stroke-width="0.7"/><path d="M0 129.04H478.5" stroke="#353535" stroke-width="0.7"/><path d="M0 135.51H478.5" stroke="#353535" stroke-width="0.7"/><path d="M0 141.97H478.5" stroke="#353535" stroke-width="0.7"/><path d="M0 148.44H478.5" stroke="#1b1b1b" stroke-width="0.9"/><path d="M0 154.91H478.5" stroke="#353535" stroke-width="0.7"/><path d="M0 161.37H478.5" stroke="#353535" stroke-width="0.7"/><path d="M0 167.84H478.5" stroke="#353535" stroke-width="0.7"/><path d="M0 174.31H478.5" stroke="#353535" stroke-width="0.7"/><path d="M0 180.77H478.5" stroke="#353535" stroke-width="0.7"/><path d="M0 187.24H478.5" stroke="#353535" stroke-width="0.7"/><path d="M0 193.71H478.5" stroke="#353535" stroke-width="0.7"/><path d="M0 200.18H478.5" stroke="#353535" stroke-width="0.7"/><path d="M0 206.64H478.5" stroke="#353535" stroke-width="0.7"/><path d="M0 213.11H478.5" stroke="#1b1b1b" stroke-width="0.9"/><path d="M0 219.58H478.5" stroke="#353535" stroke-width="0.7"/><path d="M0 226.04H478.5" stroke="#353535" stroke-width="0.7"/><path d="M0 232.51H478.5" stroke="#353535" stroke-width="0.7"/><path d="M0 238.98H478.5" stroke="#353535" stroke-width="0.7"/><path d="M0 245.45H478.5" stroke="#353535" stroke-width="0.7"/><path d="M0 251.91H478.5" stroke="#353535" stroke-width="0.7"/></svg><div style="left:119.5px;top:47.099999999999994px;width:485.5px;height:6.5px;background:#2f2f2f;"></div><div style="left:119.5px;top:47.099999999999994px;width:7px;height:258.7px;background:#2f2f2f;"></div><div style="left:126.1px;top:53.0px;width:478.5px;height:0.8px;background:#3e3e3e;"></div><div style="left:126.1px;top:53.0px;width:0.8px;height:252.4px;background:#3e3e3e;"></div><div style="left:130.67999999999998px;top:52.5px;width:0.8px;height:1.1px;background:#686868;"></div><div style="left:140.785px;top:52.5px;width:0.8px;height:1.1px;background:#686868;"></div><div style="left:150.89px;top:52.5px;width:0.8px;height:1.1px;background:#686868;"></div><div style="left:160.995px;top:52.5px;width:0.8px;height:1.1px;background:#686868;"></div><div style="left:171.1px;top:51.8px;width:0.8px;height:1.6px;background:#8c8c8c;"></div><span style="left:71.5px;width:200px;text-align:center;top:44.90px;line-height:10px;font-size:4.6px;color:#b0b0b0;font-weight:400;transform:scaleX(0.8);transform-origin:center center;">0</span><div style="left:181.20499999999998px;top:52.5px;width:0.8px;height:1.1px;background:#686868;"></div><div style="left:191.31px;top:52.5px;width:0.8px;height:1.1px;background:#686868;"></div><div style="left:201.415px;top:52.5px;width:0.8px;height:1.1px;background:#686868;"></div><div style="left:211.52px;top:52.5px;width:0.8px;height:1.1px;background:#686868;"></div><div style="left:221.625px;top:52.5px;width:0.8px;height:1.1px;background:#686868;"></div><div style="left:231.73px;top:52.5px;width:0.8px;height:1.1px;background:#686868;"></div><div style="left:241.835px;top:52.5px;width:0.8px;height:1.1px;background:#686868;"></div><div style="left:251.94px;top:52.5px;width:0.8px;height:1.1px;background:#686868;"></div><div style="left:262.045px;top:52.5px;width:0.8px;height:1.1px;background:#686868;"></div><div style="left:272.15000000000003px;top:51.8px;width:0.8px;height:1.6px;background:#8c8c8c;"></div><span style="left:172.55px;width:200px;text-align:center;top:44.90px;line-height:10px;font-size:4.6px;color:#b0b0b0;font-weight:400;transform:scaleX(0.8);transform-origin:center center;">500</span><div style="left:282.255px;top:52.5px;width:0.8px;height:1.1px;background:#686868;"></div><div style="left:292.36px;top:52.5px;width:0.8px;height:1.1px;background:#686868;"></div><div style="left:302.46500000000003px;top:52.5px;width:0.8px;height:1.1px;background:#686868;"></div><div style="left:312.57000000000005px;top:52.5px;width:0.8px;height:1.1px;background:#686868;"></div><div style="left:322.675px;top:52.5px;width:0.8px;height:1.1px;background:#686868;"></div><div style="left:332.78000000000003px;top:52.5px;width:0.8px;height:1.1px;background:#686868;"></div><div style="left:342.885px;top:52.5px;width:0.8px;height:1.1px;background:#686868;"></div><div style="left:352.99px;top:52.5px;width:0.8px;height:1.1px;background:#686868;"></div><div style="left:363.095px;top:52.5px;width:0.8px;height:1.1px;background:#686868;"></div><div style="left:373.20000000000005px;top:51.8px;width:0.8px;height:1.6px;background:#8c8c8c;"></div><span style="left:273.6px;width:200px;text-align:center;top:44.90px;line-height:10px;font-size:4.6px;color:#b0b0b0;font-weight:400;transform:scaleX(0.8);transform-origin:center center;">1000</span><div style="left:383.30500000000006px;top:52.5px;width:0.8px;height:1.1px;background:#686868;"></div><div style="left:393.41px;top:52.5px;width:0.8px;height:1.1px;background:#686868;"></div><div style="left:403.515px;top:52.5px;width:0.8px;height:1.1px;background:#686868;"></div><div style="left:413.62px;top:52.5px;width:0.8px;height:1.1px;background:#686868;"></div><div style="left:423.725px;top:52.5px;width:0.8px;height:1.1px;background:#686868;"></div><div style="left:433.83000000000004px;top:52.5px;width:0.8px;height:1.1px;background:#686868;"></div><div style="left:443.935px;top:52.5px;width:0.8px;height:1.1px;background:#686868;"></div><div style="left:454.04px;top:52.5px;width:0.8px;height:1.1px;background:#686868;"></div><div style="left:464.14500000000004px;top:52.5px;width:0.8px;height:1.1px;background:#686868;"></div><div style="left:474.25px;top:51.8px;width:0.8px;height:1.6px;background:#8c8c8c;"></div><span style="left:374.65px;width:200px;text-align:center;top:44.90px;line-height:10px;font-size:4.6px;color:#b0b0b0;font-weight:400;transform:scaleX(0.8);transform-origin:center center;">1500</span><div style="left:484.355px;top:52.5px;width:0.8px;height:1.1px;background:#686868;"></div><div style="left:494.46000000000004px;top:52.5px;width:0.8px;height:1.1px;background:#686868;"></div><div style="left:504.565px;top:52.5px;width:0.8px;height:1.1px;background:#686868;"></div><div style="left:514.67px;top:52.5px;width:0.8px;height:1.1px;background:#686868;"></div><div style="left:524.775px;top:52.5px;width:0.8px;height:1.1px;background:#686868;"></div><div style="left:534.88px;top:52.5px;width:0.8px;height:1.1px;background:#686868;"></div><div style="left:544.985px;top:52.5px;width:0.8px;height:1.1px;background:#686868;"></div><div style="left:555.09px;top:52.5px;width:0.8px;height:1.1px;background:#686868;"></div><div style="left:565.195px;top:52.5px;width:0.8px;height:1.1px;background:#686868;"></div><div style="left:575.3000000000001px;top:51.8px;width:0.8px;height:1.6px;background:#8c8c8c;"></div><span style="left:475.70000000000005px;width:200px;text-align:center;top:44.90px;line-height:10px;font-size:4.6px;color:#b0b0b0;font-weight:400;transform:scaleX(0.8);transform-origin:center center;">2000</span><div style="left:585.4050000000001px;top:52.5px;width:0.8px;height:1.1px;background:#686868;"></div><div style="left:595.5100000000001px;top:52.5px;width:0.8px;height:1.1px;background:#686868;"></div><div style="left:125.6px;top:61.995px;width:1.1px;height:0.8px;background:#686868;"></div><div style="left:124.9px;top:72.1px;width:1.6px;height:0.8px;background:#8c8c8c;"></div><div style="left:125.6px;top:82.205px;width:1.1px;height:0.8px;background:#686868;"></div><div style="left:125.6px;top:92.31px;width:1.1px;height:0.8px;background:#686868;"></div><div style="left:125.6px;top:102.41499999999999px;width:1.1px;height:0.8px;background:#686868;"></div><div style="left:125.6px;top:112.52px;width:1.1px;height:0.8px;background:#686868;"></div><div style="left:125.6px;top:122.625px;width:1.1px;height:0.8px;background:#686868;"></div><div style="left:125.6px;top:132.73px;width:1.1px;height:0.8px;background:#686868;"></div><div style="left:125.6px;top:142.835px;width:1.1px;height:0.8px;background:#686868;"></div><div style="left:125.6px;top:152.94px;width:1.1px;height:0.8px;background:#686868;"></div><div style="left:125.6px;top:163.045px;width:1.1px;height:0.8px;background:#686868;"></div><div style="left:124.9px;top:173.15px;width:1.6px;height:0.8px;background:#8c8c8c;"></div><div style="left:125.6px;top:183.255px;width:1.1px;height:0.8px;background:#686868;"></div><div style="left:125.6px;top:193.35999999999999px;width:1.1px;height:0.8px;background:#686868;"></div><div style="left:125.6px;top:203.465px;width:1.1px;height:0.8px;background:#686868;"></div><div style="left:125.6px;top:213.57px;width:1.1px;height:0.8px;background:#686868;"></div><div style="left:125.6px;top:223.67499999999998px;width:1.1px;height:0.8px;background:#686868;"></div><div style="left:125.6px;top:233.78px;width:1.1px;height:0.8px;background:#686868;"></div><div style="left:125.6px;top:243.885px;width:1.1px;height:0.8px;background:#686868;"></div><div style="left:125.6px;top:253.99px;width:1.1px;height:0.8px;background:#686868;"></div><div style="left:125.6px;top:264.095px;width:1.1px;height:0.8px;background:#686868;"></div><div style="left:124.9px;top:274.20000000000005px;width:1.6px;height:0.8px;background:#8c8c8c;"></div><div style="left:125.6px;top:284.30500000000006px;width:1.1px;height:0.8px;background:#686868;"></div><div style="left:125.6px;top:294.41px;width:1.1px;height:0.8px;background:#686868;"></div><div style="left:125.6px;top:304.515px;width:1.1px;height:0.8px;background:#686868;"></div><span style="left:120.7px;top:67.50px;line-height:10px;font-size:4.6px;color:#b0b0b0;font-weight:400;transform:scaleX(0.8);transform-origin:left center;">0</span><span style="left:113.1px;top:168.6px;width:20px;text-align:center;line-height:10px;font-size:4.6px;color:#b0b0b0;transform:rotate(90deg) scaleX(.8);">500</span><span style="left:113.1px;top:269.6px;width:20px;text-align:center;line-height:10px;font-size:4.6px;color:#b0b0b0;transform:rotate(90deg) scaleX(.8);">1000</span><div style="left:580px;top:47.3px;width:0.8px;height:6.3px;background:#35c24a;"></div><div style="left:119.5px;top:159.3px;width:7.4px;height:1.3px;background:#2f8a3c;background:repeating-linear-gradient(90deg,#359442 0 1.2px,#1f5a28 1.2px 2.4px);"></div><div style="left:118.5px;top:46.3px;width:3.4px;height:3.4px;background:transparent;border-top:1.4px solid #c49a28;border-left:1.4px solid #c49a28;box-sizing:border-box"></div><span style="left:128.8px;top:55.50px;line-height:10px;font-size:8.8px;color:#6a6a6a;font-weight:400;transform:scaleX(0.864);transform-origin:left center;">Zoom -2</span><span style="left:128.9px;top:294.80px;line-height:10px;font-size:8.6px;color:#787878;font-weight:400;transform:scaleX(0.921);transform-origin:left center;">1280 x 720 (16:9)</span><span style="left:540.8px;top:294.80px;line-height:10px;font-size:8.6px;color:#787878;font-weight:400;transform:scaleX(0.866);transform-origin:left center;">DPI Scale 0.67</span><svg style="left:593.5px;top:295.5px" width="8" height="8" viewBox="0 0 8 8"><circle cx="4" cy="4" r="2.3" fill="none" stroke="#b8c0e6" stroke-width="1.3"/><path d="M4 .4v1.4M4 6.2v1.4M.4 4h1.4M6.2 4h1.4M1.5 1.5l1 1M5.5 5.5l1 1M6.5 1.5l-1 1M1.5 6.5l1-1" stroke="#b8c0e6" stroke-width="1"/></svg><div style="left:172.2px;top:72.8px;width:154.4px;height:218.0px;background:#bdbdbd;"></div><div style="left:326.6px;top:72.8px;width:233.6px;height:218.0px;background:#fff;"></div><svg style="left:171.7px;top:72.3px" width="389.0" height="219.0"><rect x=".5" y=".5" width="388.0" height="218.0" fill="none" stroke="#666" stroke-width=".6"/><rect x=".5" y=".5" width="388.0" height="218.0" fill="none" stroke="#fff" stroke-width=".7" stroke-dasharray="1.3 1.3"/></svg><div style="left:326.79999999999995px;top:72.8px;width:0.7px;height:218.0px;background:transparent;background:repeating-linear-gradient(180deg,#cfcfcf 0 1px,#fff 1px 2.2px);"></div><svg style="left:0;top:0" width="778" height="437"><path d="M203.3 99.5 L202.3 91.8 L205.4 83.3 L211.0 79.7 L221.3 77.7 L234.1 75.1 L246.9 75.6 L259.7 78.2 L272.6 83.3 L282.8 81.8 L293.1 84.1 L300.8 90.5 L308.5 98.2 L313.1 108.5 L316.9 121.3 L318.7 134.1 L319.7 146.9 L321.3 159.7 L320.3 172.6 L319.5 182.1" fill="none" stroke="#060606" stroke-width="1.5" stroke-linejoin="round" stroke-linecap="round"/><path d="M203.3 99.5 L206.4 102.8 L216.2 104.6 L226.4 107.4 L239.2 111.0 L252.1 117.7 L261.0 120.3 L262.8 129.0 L262.3 143.1 L267.4 147.4 L269.5 158.5 L268.5 164.9" fill="none" stroke="#060606" stroke-width="1.5" stroke-linejoin="round" stroke-linecap="round"/><path d="M203.3 99.5 L198.2 108.5 L194.4 121.3 L191.8 134.1 L191.0 146.9 L191.8 152.6 L194.4 159.7 L193.6 167.4 L187.9 175.1 L182.3 182.1" fill="none" stroke="#060606" stroke-width="1.5" stroke-linejoin="round" stroke-linecap="round"/><path d="M268.5 159.2 L275.1 155.1 L282.8 157.2 L287.2 164.9 L288.2 172.6 L286.9 182.1" fill="none" stroke="#060606" stroke-width="1.5" stroke-linejoin="round" stroke-linecap="round"/><path d="M273.8 172.6 L277.2 167.4 L280.8 165.4" fill="none" stroke="#060606" stroke-width="1.5" stroke-linejoin="round" stroke-linecap="round"/><path d="M276.2 169.5 L278.7 172.6 L277.7 176.4" fill="none" stroke="#060606" stroke-width="1.5" stroke-linejoin="round" stroke-linecap="round"/><path d="M182.3 182.1 L175.6 187.7 L180.3 192.3 L186.7 195.9 L196.9 203.1 L190.5 212.1 L190.0 216.4 L194.4 222.3 L196.9 225.1 L192.6 230.3 L193.6 235.1 L195.6 237.9 L196.9 244.1 L193.6 251.8 L194.4 259.5 L198.2 263.3 L211.0 265.1 L225.1 264.6 L234.1 259.5 L246.9 244.6 L257.2 231.3 L264.9 218.5 L268.7 205.6 L269.5 195.4" fill="none" stroke="#060606" stroke-width="1.5" stroke-linejoin="round" stroke-linecap="round"/><path d="M186.7 194.9 L195.1 195.4 L199.5 199.5" fill="none" stroke="#060606" stroke-width="1.5" stroke-linejoin="round" stroke-linecap="round"/><path d="M196.9 225.1 L205.9 222.6 L217.4 217.2" fill="none" stroke="#060606" stroke-width="1.5" stroke-linejoin="round" stroke-linecap="round"/><path d="M194.4 215.9 L200.8 217.4 L208.5 215.9" fill="none" stroke="#060606" stroke-width="1.5" stroke-linejoin="round" stroke-linecap="round"/><path d="M200.8 235.9 L207.9 231.3" fill="none" stroke="#060606" stroke-width="1.5" stroke-linejoin="round" stroke-linecap="round"/><path d="M203.3 180.0 L209.0 192.3" fill="none" stroke="#060606" stroke-width="1.5" stroke-linejoin="round" stroke-linecap="round"/><path d="M267.4 192.8 L272.6 194.9 L279.0 190.3 L284.1 182.6 L285.9 180.0" fill="none" stroke="#060606" stroke-width="1.5" stroke-linejoin="round" stroke-linecap="round"/><path d="M229.5 267.7 L231.8 275.4 L229.5 285.1" fill="none" stroke="#060606" stroke-width="1.5" stroke-linejoin="round" stroke-linecap="round"/><path d="M265.4 241.5 L261.0 256.9 L253.3 271.0 L246.9 279.0" fill="none" stroke="#060606" stroke-width="1.5" stroke-linejoin="round" stroke-linecap="round"/><path d="M319.5 180.0 L318.7 190.3 L313.6 201.0 L309.7 210.8 L307.4 221.0 L303.3 227.7 L298.2 231.8 L296.7 227.7" fill="none" stroke="#060606" stroke-width="1.5" stroke-linejoin="round" stroke-linecap="round"/><path d="M274.6 218.5 L277.7 226.2 L285.4 231.3 L290.5 235.4 L294.4 244.1" fill="none" stroke="#060606" stroke-width="1.5" stroke-linejoin="round" stroke-linecap="round"/><path d="M296.4 227.7 L295.6 244.1 L296.2 256.9 L299.5 267.2 L303.3 277.4" fill="none" stroke="#060606" stroke-width="1.5" stroke-linejoin="round" stroke-linecap="round"/><path d="M196.3 142.7C197.0 141.5 198.9 141.2 200.4 140.8C202.0 140.3 203.0 140.0 205.6 139.9C208.1 139.9 212.4 140.1 215.9 140.2C219.3 140.4 223.6 140.4 226.2 141.0C228.7 141.5 229.8 142.2 231.3 143.4C232.8 144.6 234.3 147.0 235.2 148.2C236.1 149.3 236.7 150.5 236.4 150.4C236.1 150.4 234.7 148.7 233.4 147.8C232.0 146.8 230.3 145.5 228.2 144.9C226.2 144.2 223.6 143.8 221.0 143.7C218.4 143.7 215.3 143.8 212.8 144.4C210.2 144.9 207.5 146.2 205.6 146.8C203.7 147.5 203.0 148.0 201.5 148.2C199.9 148.4 197.2 148.9 196.3 148.0C195.5 147.1 195.6 143.9 196.3 142.7Z" fill="none" stroke="#060606" stroke-width="1.3" stroke-linejoin="round" stroke-linecap="round"/><path d="M205.6 157.1C206.5 155.5 208.1 155.1 209.7 154.7C211.2 154.2 213.1 154.2 214.8 154.5C216.6 154.9 218.3 155.9 220.0 157.0C221.7 158.1 223.8 159.8 225.1 161.1C226.4 162.4 228.0 163.7 227.7 164.8C227.4 166.0 224.9 167.0 223.1 167.9C221.3 168.9 219.0 169.9 216.9 170.5C214.8 171.0 212.5 171.0 210.7 171.2C208.9 171.4 207.1 172.1 206.1 171.5C205.1 171.0 205.3 169.1 205.0 167.9C204.6 166.7 204.0 166.1 204.1 164.3C204.2 162.5 204.7 158.7 205.6 157.1Z" fill="none" stroke="#060606" stroke-width="1.3" stroke-linejoin="round" stroke-linecap="round"/><path d="M206.8 157.0C206.5 157.7 205.7 159.8 205.2 161.2C204.6 162.7 203.8 165.1 203.5 165.9" fill="none" stroke="#060606" stroke-width="1.3" stroke-linejoin="round" stroke-linecap="round"/><path d="M212.6 156.8C212.6 157.6 212.9 160.2 212.8 161.7C212.7 163.3 212.4 164.7 212.0 165.9C211.5 167.1 210.5 168.4 210.2 169.0" fill="none" stroke="#060606" stroke-width="1.3" stroke-linejoin="round" stroke-linecap="round"/><path d="M208.5 157.1C208.4 157.9 208.2 160.3 208.3 161.7C208.3 163.2 208.6 164.9 208.9 165.9C209.1 166.9 209.6 167.4 209.7 167.7" fill="none" stroke="#060606" stroke-width="2.2" stroke-linecap="round"/></svg><svg style="left:429.2px;top:94.2px" width="32" height="87"><g transform="skewX(3.4) scale(0.9 0.945)"><path d="M0.4 2.0C0.1 4.1 0.5 8.7 1.2 13.0C1.9 17.3 3.5 23.7 4.6 28.0C5.7 32.3 6.7 35.2 7.7 38.8C8.7 42.4 9.8 46.0 10.7 49.6C11.6 53.2 12.4 56.7 13.3 60.3C14.2 63.9 15.2 67.9 16.2 71.1C17.1 74.3 17.8 77.4 19.0 79.7C20.2 82.0 21.9 84.8 23.3 84.8C24.7 84.8 26.8 82.3 27.2 80.0C27.6 77.7 26.9 74.4 26.0 71.1C25.1 67.8 23.1 63.9 21.6 60.3C20.1 56.7 18.1 53.2 16.9 49.6C15.7 46.0 15.1 42.4 14.3 38.8C13.5 35.2 12.8 32.3 11.9 28.0C11.0 23.7 9.6 17.2 8.7 13.0C7.8 8.8 7.4 5.1 6.4 3.0C5.5 0.9 4.0 0.4 3.0 0.2C2.0 0.0 0.7 -0.1 0.4 2.0Z" fill="none" stroke="#1c1c70" stroke-width="0.8"/><path d="M2.4 6.0C2.6 7.2 3.1 9.3 3.9 13.0C4.7 16.7 6.2 23.7 7.2 28.0C8.3 32.3 9.1 35.2 10.1 38.8C11.0 42.4 11.9 46.0 12.9 49.6C14.0 53.2 15.2 56.7 16.3 60.3C17.4 63.9 18.8 67.9 19.7 71.1C20.7 74.3 21.2 77.5 22.0 79.7C22.7 82.0 23.8 83.8 24.2 84.6" fill="none" stroke="#1c1c70" stroke-width="0.8"/><path d="M4.8 6.4C5.1 7.5 5.6 9.4 6.4 13.0C7.3 16.6 8.7 23.7 9.7 28.0C10.7 32.3 11.4 35.2 12.3 38.8C13.2 42.4 13.9 46.0 15.0 49.6C16.2 53.2 17.8 56.7 19.1 60.3C20.4 63.9 22.1 67.9 23.1 71.1C24.0 74.3 24.3 77.6 24.7 79.7C25.2 81.8 25.6 83.1 25.8 83.8" fill="none" stroke="#1c1c70" stroke-width="0.8"/><path d="M2.9 14.0 L8.2 16.1 L3.9 18.2 L9.1 20.3 L4.8 22.4 L10.1 24.5 L5.7 26.6 L11.0 28.7 L6.8 30.8 L11.9 32.9 L8.0 35.0 L12.9 37.1 L9.1 39.2 L13.9 41.3 L10.3 43.4 L15.0 45.5 L11.4 47.6 L16.0 49.7 L12.6 51.8 L17.7 53.9 L13.7 56.0 L19.5 58.1 L14.9 60.2 L21.1 62.3 L16.2 64.4 L22.8 66.5 L17.4 68.6 L24.4 70.7 L18.7 72.8 L25.2 74.9 L19.9 77.0" fill="none" stroke="#1c1c70" stroke-width=".45" opacity=".8"/><ellipse cx="3.3" cy="3.1" rx="2.6" ry="2.7" fill="#fff" stroke="#1c1c70" stroke-width="1.0"/><path d="M.1 3.4 L1.2 .3 L4.2 .1 L3.2 1.6 L1.8 2.4 L1.3 4Z" fill="#000" stroke="#000" stroke-width=".8" stroke-linejoin="round"/></g></svg><svg style="left:380.4px;top:190.2px" width="32" height="87"><g transform="skewX(1.3) scale(1 1)"><path d="M0.4 2.0C0.1 4.1 0.5 8.7 1.2 13.0C1.9 17.3 3.5 23.7 4.6 28.0C5.7 32.3 6.7 35.2 7.7 38.8C8.7 42.4 9.8 46.0 10.7 49.6C11.6 53.2 12.4 56.7 13.3 60.3C14.2 63.9 15.2 67.9 16.2 71.1C17.1 74.3 17.8 77.4 19.0 79.7C20.2 82.0 21.9 84.8 23.3 84.8C24.7 84.8 26.8 82.3 27.2 80.0C27.6 77.7 26.9 74.4 26.0 71.1C25.1 67.8 23.1 63.9 21.6 60.3C20.1 56.7 18.1 53.2 16.9 49.6C15.7 46.0 15.1 42.4 14.3 38.8C13.5 35.2 12.8 32.3 11.9 28.0C11.0 23.7 9.6 17.2 8.7 13.0C7.8 8.8 7.4 5.1 6.4 3.0C5.5 0.9 4.0 0.4 3.0 0.2C2.0 0.0 0.7 -0.1 0.4 2.0Z" fill="none" stroke="#14144e" stroke-width="0.8"/><path d="M2.4 6.0C2.6 7.2 3.1 9.3 3.9 13.0C4.7 16.7 6.2 23.7 7.2 28.0C8.3 32.3 9.1 35.2 10.1 38.8C11.0 42.4 11.9 46.0 12.9 49.6C14.0 53.2 15.2 56.7 16.3 60.3C17.4 63.9 18.8 67.9 19.7 71.1C20.7 74.3 21.2 77.5 22.0 79.7C22.7 82.0 23.8 83.8 24.2 84.6" fill="none" stroke="#14144e" stroke-width="0.8"/><path d="M4.8 6.4C5.1 7.5 5.6 9.4 6.4 13.0C7.3 16.6 8.7 23.7 9.7 28.0C10.7 32.3 11.4 35.2 12.3 38.8C13.2 42.4 13.9 46.0 15.0 49.6C16.2 53.2 17.8 56.7 19.1 60.3C20.4 63.9 22.1 67.9 23.1 71.1C24.0 74.3 24.3 77.6 24.7 79.7C25.2 81.8 25.6 83.1 25.8 83.8" fill="none" stroke="#14144e" stroke-width="0.8"/><path d="M2.9 14.0 L8.2 16.1 L3.9 18.2 L9.1 20.3 L4.8 22.4 L10.1 24.5 L5.7 26.6 L11.0 28.7 L6.8 30.8 L11.9 32.9 L8.0 35.0 L12.9 37.1 L9.1 39.2 L13.9 41.3 L10.3 43.4 L15.0 45.5 L11.4 47.6 L16.0 49.7 L12.6 51.8 L17.7 53.9 L13.7 56.0 L19.5 58.1 L14.9 60.2 L21.1 62.3 L16.2 64.4 L22.8 66.5 L17.4 68.6 L24.4 70.7 L18.7 72.8 L25.2 74.9 L19.9 77.0" fill="none" stroke="#14144e" stroke-width=".45" opacity=".8"/><ellipse cx="3.3" cy="3.1" rx="2.6" ry="2.7" fill="#fff" stroke="#14144e" stroke-width="1.0"/><path d="M.1 3.4 L1.2 .3 L4.2 .1 L3.2 1.6 L1.8 2.4 L1.3 4Z" fill="#000" stroke="#000" stroke-width=".8" stroke-linejoin="round"/></g></svg><svg style="left:412.1px;top:190.2px" width="32" height="87"><g transform="skewX(1.3) scale(1 1)"><path d="M0.4 2.0C0.1 4.1 0.5 8.7 1.2 13.0C1.9 17.3 3.5 23.7 4.6 28.0C5.7 32.3 6.7 35.2 7.7 38.8C8.7 42.4 9.8 46.0 10.7 49.6C11.6 53.2 12.4 56.7 13.3 60.3C14.2 63.9 15.2 67.9 16.2 71.1C17.1 74.3 17.8 77.4 19.0 79.7C20.2 82.0 21.9 84.8 23.3 84.8C24.7 84.8 26.8 82.3 27.2 80.0C27.6 77.7 26.9 74.4 26.0 71.1C25.1 67.8 23.1 63.9 21.6 60.3C20.1 56.7 18.1 53.2 16.9 49.6C15.7 46.0 15.1 42.4 14.3 38.8C13.5 35.2 12.8 32.3 11.9 28.0C11.0 23.7 9.6 17.2 8.7 13.0C7.8 8.8 7.4 5.1 6.4 3.0C5.5 0.9 4.0 0.4 3.0 0.2C2.0 0.0 0.7 -0.1 0.4 2.0Z" fill="none" stroke="#e0284e" stroke-width="0.8"/><path d="M2.4 6.0C2.6 7.2 3.1 9.3 3.9 13.0C4.7 16.7 6.2 23.7 7.2 28.0C8.3 32.3 9.1 35.2 10.1 38.8C11.0 42.4 11.9 46.0 12.9 49.6C14.0 53.2 15.2 56.7 16.3 60.3C17.4 63.9 18.8 67.9 19.7 71.1C20.7 74.3 21.2 77.5 22.0 79.7C22.7 82.0 23.8 83.8 24.2 84.6" fill="none" stroke="#e0284e" stroke-width="0.8"/><path d="M4.8 6.4C5.1 7.5 5.6 9.4 6.4 13.0C7.3 16.6 8.7 23.7 9.7 28.0C10.7 32.3 11.4 35.2 12.3 38.8C13.2 42.4 13.9 46.0 15.0 49.6C16.2 53.2 17.8 56.7 19.1 60.3C20.4 63.9 22.1 67.9 23.1 71.1C24.0 74.3 24.3 77.6 24.7 79.7C25.2 81.8 25.6 83.1 25.8 83.8" fill="none" stroke="#e0284e" stroke-width="0.8"/><path d="M2.9 14.0 L8.2 16.1 L3.9 18.2 L9.1 20.3 L4.8 22.4 L10.1 24.5 L5.7 26.6 L11.0 28.7 L6.8 30.8 L11.9 32.9 L8.0 35.0 L12.9 37.1 L9.1 39.2 L13.9 41.3 L10.3 43.4 L15.0 45.5 L11.4 47.6 L16.0 49.7 L12.6 51.8 L17.7 53.9 L13.7 56.0 L19.5 58.1 L14.9 60.2 L21.1 62.3 L16.2 64.4 L22.8 66.5 L17.4 68.6 L24.4 70.7 L18.7 72.8 L25.2 74.9 L19.9 77.0" fill="none" stroke="#e0284e" stroke-width=".45" opacity=".8"/><ellipse cx="3.3" cy="3.1" rx="2.6" ry="2.7" fill="#fff" stroke="#e0284e" stroke-width="1.0"/><path d="M.1 3.4 L1.2 .3 L4.2 .1 L3.2 1.6 L1.8 2.4 L1.3 4Z" fill="#e01838" stroke="#e01838" stroke-width=".8" stroke-linejoin="round"/></g></svg><svg style="left:443.8px;top:190.2px" width="32" height="87"><g transform="skewX(1.3) scale(1 1)"><path d="M0.4 2.0C0.1 4.1 0.5 8.7 1.2 13.0C1.9 17.3 3.5 23.7 4.6 28.0C5.7 32.3 6.7 35.2 7.7 38.8C8.7 42.4 9.8 46.0 10.7 49.6C11.6 53.2 12.4 56.7 13.3 60.3C14.2 63.9 15.2 67.9 16.2 71.1C17.1 74.3 17.8 77.4 19.0 79.7C20.2 82.0 21.9 84.8 23.3 84.8C24.7 84.8 26.8 82.3 27.2 80.0C27.6 77.7 26.9 74.4 26.0 71.1C25.1 67.8 23.1 63.9 21.6 60.3C20.1 56.7 18.1 53.2 16.9 49.6C15.7 46.0 15.1 42.4 14.3 38.8C13.5 35.2 12.8 32.3 11.9 28.0C11.0 23.7 9.6 17.2 8.7 13.0C7.8 8.8 7.4 5.1 6.4 3.0C5.5 0.9 4.0 0.4 3.0 0.2C2.0 0.0 0.7 -0.1 0.4 2.0Z" fill="none" stroke="#1c1cf0" stroke-width="0.8"/><path d="M2.4 6.0C2.6 7.2 3.1 9.3 3.9 13.0C4.7 16.7 6.2 23.7 7.2 28.0C8.3 32.3 9.1 35.2 10.1 38.8C11.0 42.4 11.9 46.0 12.9 49.6C14.0 53.2 15.2 56.7 16.3 60.3C17.4 63.9 18.8 67.9 19.7 71.1C20.7 74.3 21.2 77.5 22.0 79.7C22.7 82.0 23.8 83.8 24.2 84.6" fill="none" stroke="#1c1cf0" stroke-width="0.8"/><path d="M4.8 6.4C5.1 7.5 5.6 9.4 6.4 13.0C7.3 16.6 8.7 23.7 9.7 28.0C10.7 32.3 11.4 35.2 12.3 38.8C13.2 42.4 13.9 46.0 15.0 49.6C16.2 53.2 17.8 56.7 19.1 60.3C20.4 63.9 22.1 67.9 23.1 71.1C24.0 74.3 24.3 77.6 24.7 79.7C25.2 81.8 25.6 83.1 25.8 83.8" fill="none" stroke="#1c1cf0" stroke-width="0.8"/><path d="M2.9 14.0 L8.2 16.1 L3.9 18.2 L9.1 20.3 L4.8 22.4 L10.1 24.5 L5.7 26.6 L11.0 28.7 L6.8 30.8 L11.9 32.9 L8.0 35.0 L12.9 37.1 L9.1 39.2 L13.9 41.3 L10.3 43.4 L15.0 45.5 L11.4 47.6 L16.0 49.7 L12.6 51.8 L17.7 53.9 L13.7 56.0 L19.5 58.1 L14.9 60.2 L21.1 62.3 L16.2 64.4 L22.8 66.5 L17.4 68.6 L24.4 70.7 L18.7 72.8 L25.2 74.9 L19.9 77.0" fill="none" stroke="#1c1cf0" stroke-width=".45" opacity=".8"/><ellipse cx="3.3" cy="3.1" rx="2.6" ry="2.7" fill="#fff" stroke="#1c1cf0" stroke-width="1.0"/><path d="M.1 3.4 L1.2 .3 L4.2 .1 L3.2 1.6 L1.8 2.4 L1.3 4Z" fill="#1010f0" stroke="#1010f0" stroke-width=".8" stroke-linejoin="round"/></g></svg><svg style="left:475.3px;top:190.2px" width="32" height="87"><g transform="skewX(1.3) scale(1 1)"><path d="M0.4 2.0C0.1 4.1 0.5 8.7 1.2 13.0C1.9 17.3 3.5 23.7 4.6 28.0C5.7 32.3 6.7 35.2 7.7 38.8C8.7 42.4 9.8 46.0 10.7 49.6C11.6 53.2 12.4 56.7 13.3 60.3C14.2 63.9 15.2 67.9 16.2 71.1C17.1 74.3 17.8 77.4 19.0 79.7C20.2 82.0 21.9 84.8 23.3 84.8C24.7 84.8 26.8 82.3 27.2 80.0C27.6 77.7 26.9 74.4 26.0 71.1C25.1 67.8 23.1 63.9 21.6 60.3C20.1 56.7 18.1 53.2 16.9 49.6C15.7 46.0 15.1 42.4 14.3 38.8C13.5 35.2 12.8 32.3 11.9 28.0C11.0 23.7 9.6 17.2 8.7 13.0C7.8 8.8 7.4 5.1 6.4 3.0C5.5 0.9 4.0 0.4 3.0 0.2C2.0 0.0 0.7 -0.1 0.4 2.0Z" fill="none" stroke="#f0d21e" stroke-width="0.8"/><path d="M2.4 6.0C2.6 7.2 3.1 9.3 3.9 13.0C4.7 16.7 6.2 23.7 7.2 28.0C8.3 32.3 9.1 35.2 10.1 38.8C11.0 42.4 11.9 46.0 12.9 49.6C14.0 53.2 15.2 56.7 16.3 60.3C17.4 63.9 18.8 67.9 19.7 71.1C20.7 74.3 21.2 77.5 22.0 79.7C22.7 82.0 23.8 83.8 24.2 84.6" fill="none" stroke="#f0d21e" stroke-width="0.8"/><path d="M4.8 6.4C5.1 7.5 5.6 9.4 6.4 13.0C7.3 16.6 8.7 23.7 9.7 28.0C10.7 32.3 11.4 35.2 12.3 38.8C13.2 42.4 13.9 46.0 15.0 49.6C16.2 53.2 17.8 56.7 19.1 60.3C20.4 63.9 22.1 67.9 23.1 71.1C24.0 74.3 24.3 77.6 24.7 79.7C25.2 81.8 25.6 83.1 25.8 83.8" fill="none" stroke="#f0d21e" stroke-width="0.8"/><path d="M2.9 14.0 L8.2 16.1 L3.9 18.2 L9.1 20.3 L4.8 22.4 L10.1 24.5 L5.7 26.6 L11.0 28.7 L6.8 30.8 L11.9 32.9 L8.0 35.0 L12.9 37.1 L9.1 39.2 L13.9 41.3 L10.3 43.4 L15.0 45.5 L11.4 47.6 L16.0 49.7 L12.6 51.8 L17.7 53.9 L13.7 56.0 L19.5 58.1 L14.9 60.2 L21.1 62.3 L16.2 64.4 L22.8 66.5 L17.4 68.6 L24.4 70.7 L18.7 72.8 L25.2 74.9 L19.9 77.0" fill="none" stroke="#f0d21e" stroke-width=".45" opacity=".8"/><ellipse cx="3.3" cy="3.1" rx="2.6" ry="2.7" fill="#fff" stroke="#f0d21e" stroke-width="1.0"/><path d="M.1 3.4 L1.2 .3 L4.2 .1 L3.2 1.6 L1.8 2.4 L1.3 4Z" fill="#f0d000" stroke="#f0d000" stroke-width=".8" stroke-linejoin="round"/></g></svg><svg style="left:379.2px;top:186px" width="128" height="93"><rect x=".3" y=".3" width="126.4" height="92.3" fill="none" stroke="#9a9a9a" stroke-width=".6" stroke-dasharray="1 1.2"/></svg><div style="left:529.8px;top:76.2px;width:27.4px;height:9.6px;background:#d9d9d9;background:linear-gradient(#e2e2e2,#cecece 60%,#b6b6b6);border-radius:.5px"></div><span style="left:536.8px;top:76.70px;line-height:10px;font-size:6.8px;color:#111;font-weight:700;transform:scaleX(0.787);transform-origin:left center;">Back</span><div style="left:478px;top:55.3px;width:9.2px;height:9.4px;background:#e08a14;border-radius:1.5px 1.5px 1.5px 1.5px;"></div><div style="left:479.6px;top:57.4px;width:6px;height:5.2px;background:transparent;border:.7px solid #8a560c;box-sizing:border-box;border-radius:.6px"></div><div style="left:488.8px;top:55.3px;width:9.6px;height:9.4px;background:#e08a14;border-radius:1.5px 0px 0px 1.5px;"></div><div style="left:498.4px;top:55.3px;width:8.8px;height:9.4px;background:#b9b9b9;border-radius:0px 1.5px 1.5px 0px;"></div><span style="left:393.6px;width:200px;text-align:center;top:55.00px;line-height:10px;font-size:5.4px;color:#3a4a66;font-weight:700;transform:scaleX(0.8);transform-origin:center center;">1A</span><span style="left:402.8px;width:200px;text-align:center;top:55.00px;line-height:10px;font-size:6px;color:#333;font-weight:700;transform:scaleX(0.8);transform-origin:center center;">R</span><div style="left:509.5px;top:55.3px;width:9.6px;height:9.4px;background:#e08a14;border-radius:1.5px 0px 0px 1.5px;"></div><div style="left:519.1px;top:55.3px;width:10px;height:9.4px;background:#b9b9b9;border-radius:0px 1.5px 1.5px 0px;"></div><div style="left:511.6px;top:57.4px;width:5.6px;height:5.2px;background:#4a2c04;opacity:.8;background:repeating-linear-gradient(0deg,#4a2c04 0 1.4px,#8a560c 1.4px 1.9px);"></div><span style="left:424.20000000000005px;width:200px;text-align:center;top:54.80px;line-height:10px;font-size:6px;color:#222;font-weight:700;transform:scaleX(0.85);transform-origin:center center;text-decoration:underline;">4</span><div style="left:530.3px;top:55.3px;width:8.8px;height:9.4px;background:#b9b9b9;border-radius:1.5px 1.5px 1.5px 1.5px;"></div><svg style="left:531.2px;top:56.2px" width="7" height="7.6" viewBox="0 0 7 7.6"><path d="M3.5 .6v6.4M.4 3.8h6.2" stroke="#555" stroke-width=".6"/><path d="M3.5 .2l1 1.3h-2zM3.5 7.4l1-1.3h-2zM.1 3.8l1.3-1v2zM6.9 3.8l-1.3-1v2z" fill="#555"/></svg><div style="left:540.5px;top:55.3px;width:32px;height:9.4px;background:#b9b9b9;border-radius:2px 2px 2px 2px;"></div><span style="left:542.3px;top:55.00px;line-height:10px;font-size:5.8px;color:#111;font-weight:700;transform:scaleX(0.728);transform-origin:left center;">Screen Size</span><span style="left:567px;top:55.00px;line-height:10px;font-size:5.4px;color:#111;font-weight:400;">▾</span><div style="left:574px;top:55.3px;width:30.6px;height:9.4px;background:#b9b9b9;border-radius:2px 2px 2px 2px;"></div><span style="left:575.6px;top:55.00px;line-height:10px;font-size:5.8px;color:#111;font-weight:700;transform:scaleX(0.743);transform-origin:left center;">Fill Screen</span><span style="left:598.4px;top:55.00px;line-height:10px;font-size:5.4px;color:#111;font-weight:400;">▾</span>
</div></body></html>
